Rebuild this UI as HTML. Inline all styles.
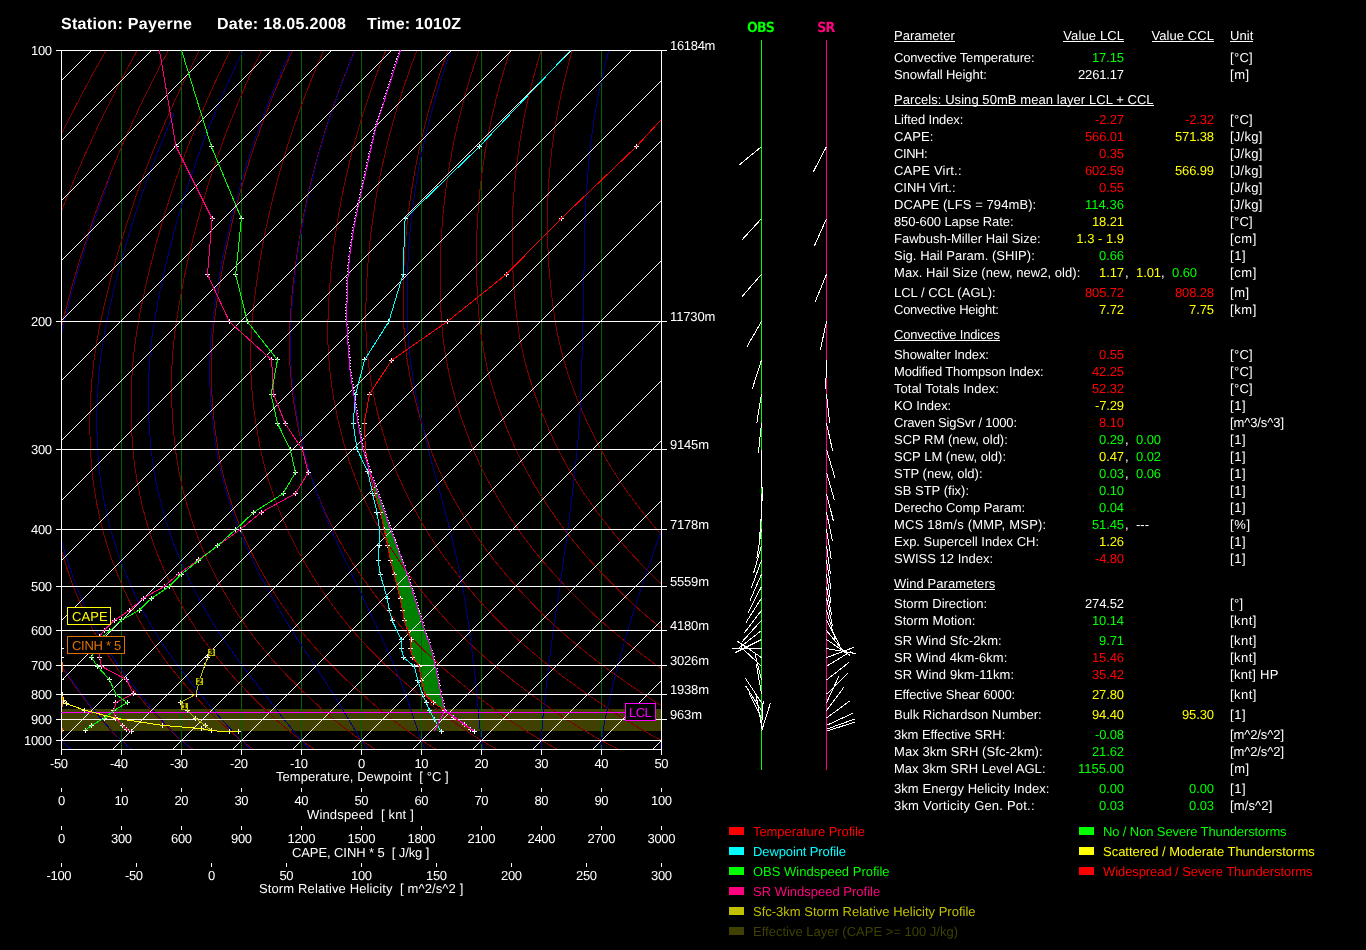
<!DOCTYPE html>
<html><head><meta charset="utf-8"><title>Sounding Payerne 18.05.2008 1010Z</title>
<style>
html,body{margin:0;padding:0;background:#000;}
body{width:1366px;height:950px;overflow:hidden;}
svg{display:block;will-change:transform;font-family:"Liberation Sans",Arial,sans-serif;font-size:13px;}
</style></head><body>
<svg width="1366" height="950" viewBox="0 0 1366 950" shape-rendering="crispEdges" text-rendering="geometricPrecision">
<defs><clipPath id="plotclip"><rect x="61" y="50" width="601" height="700"/></clipPath>
<clipPath id="plotclip2"><rect x="61" y="50" width="603" height="700"/></clipPath></defs>
<rect width="1366" height="950" fill="#000"/>
<g clip-path="url(#plotclip)">
<rect x="61" y="709" width="601" height="22" fill="#404000"/>
<polygon points="373.5,481.0 391.0,530.2 407.6,575.0 424.3,628.9 431.5,649.4 435.8,667.3 440.2,690.3 444.8,710.5 444.8,710.5 433.3,702.6 424.8,694.2 421.2,680.1 419.2,666.0 412.8,657.8 410.2,648.6 411.0,639.9 404.3,620.7 402.5,610.4 400.0,598.1 394.1,574.3 390.5,560.4 387.7,545.6 384.0,529.0 380.7,512.3 374.5,493.0" fill="#008000"/>
<line x1="121.5" y1="50.0" x2="121.5" y2="750.0" stroke="#006400" stroke-width="1"/>
<line x1="181.5" y1="50.0" x2="181.5" y2="750.0" stroke="#006400" stroke-width="1"/>
<line x1="241.5" y1="50.0" x2="241.5" y2="750.0" stroke="#006400" stroke-width="1"/>
<line x1="301.5" y1="50.0" x2="301.5" y2="750.0" stroke="#006400" stroke-width="1"/>
<line x1="361.5" y1="50.0" x2="361.5" y2="750.0" stroke="#006400" stroke-width="1"/>
<line x1="421.5" y1="50.0" x2="421.5" y2="750.0" stroke="#006400" stroke-width="1"/>
<line x1="481.5" y1="50.0" x2="481.5" y2="750.0" stroke="#006400" stroke-width="1"/>
<line x1="541.5" y1="50.0" x2="541.5" y2="750.0" stroke="#006400" stroke-width="1"/>
<line x1="601.5" y1="50.0" x2="601.5" y2="750.0" stroke="#006400" stroke-width="1"/>
<polyline points="106.1,50.5 102.1,57.5 98.1,64.5 94.2,71.5 90.4,78.5 86.6,85.5 82.8,92.5 79.1,99.5 75.5,106.5 71.9,113.5 68.3,120.5 64.8,127.5 61.4,134.5 58.0,141.5 54.6,148.5 51.3,155.5 48.0,162.5 44.8,169.5 41.7,176.5 38.5,183.5 35.5,190.5 32.5,197.5 29.5,204.5 26.6,211.5 23.7,218.5 24.8,694.5 29.6,701.5 34.5,708.5 39.7,715.5 45.2,722.5 51.2,729.5 57.6,736.5 64.6,743.5 71.3,749.5" fill="none" stroke="#800000" stroke-width="1" />
<polyline points="137.2,50.5 133.3,57.5 129.5,64.5 125.7,71.5 122.0,78.5 118.4,85.5 114.8,92.5 111.2,99.5 107.7,106.5 104.2,113.5 100.8,120.5 97.5,127.5 94.2,134.5 91.0,141.5 87.8,148.5 84.6,155.5 81.5,162.5 78.5,169.5 75.5,176.5 72.6,183.5 69.7,190.5 66.8,197.5 64.0,204.5 61.3,211.5 58.6,218.5 56.0,225.5 53.4,232.5 50.9,239.5 48.4,246.5 46.0,253.5 43.6,260.5 41.2,267.5 38.9,274.5 36.7,281.5 34.5,288.5 32.4,295.5 30.3,302.5 28.3,309.5 26.3,316.5 24.3,323.5 22.5,330.5 22.9,582.5 25.2,589.5 27.5,596.5 30.1,603.5 32.8,610.5 35.7,617.5 38.8,624.5 42.0,631.5 45.5,638.5 49.2,645.5 53.2,652.5 57.3,659.5 61.6,666.5 66.2,673.5 70.9,680.5 75.9,687.5 81.1,694.5 86.4,701.5 91.8,708.5 97.6,715.5 103.7,722.5 110.2,729.5 117.2,736.5 124.9,743.5 132.1,749.5" fill="none" stroke="#800000" stroke-width="1" />
<polyline points="168.3,50.5 164.5,57.5 160.8,64.5 157.2,71.5 153.7,78.5 150.1,85.5 146.7,92.5 143.3,99.5 139.9,106.5 136.6,113.5 133.4,120.5 130.2,127.5 127.0,134.5 123.9,141.5 120.9,148.5 117.9,155.5 115.0,162.5 112.1,169.5 109.3,176.5 106.6,183.5 103.9,190.5 101.2,197.5 98.6,204.5 96.0,211.5 93.5,218.5 91.1,225.5 88.7,232.5 86.4,239.5 84.1,246.5 81.8,253.5 79.6,260.5 77.5,267.5 75.4,274.5 73.4,281.5 71.4,288.5 69.5,295.5 67.6,302.5 65.8,309.5 64.0,316.5 62.3,323.5 60.6,330.5 59.1,337.5 57.7,344.5 56.4,351.5 55.1,358.5 54.0,365.5 53.0,372.5 52.1,379.5 51.3,386.5 50.5,393.5 49.9,400.5 49.3,407.5 48.9,414.5 48.5,421.5 48.2,428.5 48.0,435.5 47.9,442.5 47.9,449.5 48.0,456.5 48.2,463.5 48.5,470.5 49.0,477.5 49.6,484.5 50.3,491.5 51.2,498.5 52.2,505.5 53.3,512.5 54.5,519.5 55.9,526.5 57.3,533.5 59.0,540.5 60.7,547.5 62.7,554.5 64.8,561.5 67.0,568.5 69.4,575.5 71.9,582.5 74.5,589.5 77.3,596.5 80.3,603.5 83.4,610.5 86.7,617.5 90.2,624.5 93.9,631.5 97.9,638.5 102.0,645.5 106.4,652.5 111.1,659.5 115.9,666.5 120.9,673.5 126.2,680.5 131.7,687.5 137.4,694.5 143.2,701.5 149.2,708.5 155.5,715.5 162.2,722.5 169.3,729.5 176.9,736.5 185.2,743.5 193.0,749.5" fill="none" stroke="#800000" stroke-width="1" />
<polyline points="199.3,50.5 195.7,57.5 192.2,64.5 188.7,71.5 185.3,78.5 181.9,85.5 178.6,92.5 175.3,99.5 172.1,106.5 169.0,113.5 165.9,120.5 162.9,127.5 159.9,134.5 156.9,141.5 154.1,148.5 151.3,155.5 148.5,162.5 145.8,169.5 143.2,176.5 140.6,183.5 138.0,190.5 135.6,197.5 133.1,204.5 130.8,211.5 128.5,218.5 126.2,225.5 124.0,232.5 121.8,239.5 119.7,246.5 117.7,253.5 115.7,260.5 113.8,267.5 111.9,274.5 110.1,281.5 108.3,288.5 106.6,295.5 104.9,302.5 103.3,309.5 101.7,316.5 100.2,323.5 98.8,330.5 97.5,337.5 96.3,344.5 95.2,351.5 94.2,358.5 93.4,365.5 92.6,372.5 91.9,379.5 91.3,386.5 90.9,393.5 90.5,400.5 90.2,407.5 90.0,414.5 89.9,421.5 89.9,428.5 90.0,435.5 90.2,442.5 90.4,449.5 90.8,456.5 91.3,463.5 91.9,470.5 92.7,477.5 93.7,484.5 94.7,491.5 95.9,498.5 97.2,505.5 98.7,512.5 100.2,519.5 101.9,526.5 103.7,533.5 105.7,540.5 107.8,547.5 110.1,554.5 112.6,561.5 115.2,568.5 118.0,575.5 120.9,582.5 123.9,589.5 127.1,596.5 130.5,603.5 134.0,610.5 137.8,617.5 141.7,624.5 145.8,631.5 150.2,638.5 154.9,645.5 159.7,652.5 164.8,659.5 170.1,666.5 175.7,673.5 181.5,680.5 187.5,687.5 193.7,694.5 200.0,701.5 206.5,708.5 213.4,715.5 220.6,722.5 228.3,729.5 236.5,736.5 245.4,743.5 253.8,749.5" fill="none" stroke="#800000" stroke-width="1" />
<polyline points="230.4,50.5 226.9,57.5 223.5,64.5 220.2,71.5 216.9,78.5 213.7,85.5 210.5,92.5 207.4,99.5 204.3,106.5 201.3,113.5 198.4,120.5 195.5,127.5 192.7,134.5 189.9,141.5 187.2,148.5 184.6,155.5 182.0,162.5 179.5,169.5 177.0,176.5 174.6,183.5 172.2,190.5 169.9,197.5 167.7,204.5 165.5,211.5 163.4,218.5 161.3,225.5 159.3,232.5 157.3,239.5 155.4,246.5 153.6,253.5 151.8,260.5 150.0,267.5 148.4,274.5 146.7,281.5 145.2,288.5 143.7,295.5 142.2,302.5 140.8,309.5 139.4,316.5 138.2,323.5 137.0,330.5 135.9,337.5 134.9,344.5 134.1,351.5 133.3,358.5 132.7,365.5 132.2,372.5 131.7,379.5 131.4,386.5 131.2,393.5 131.1,400.5 131.1,407.5 131.2,414.5 131.3,421.5 131.6,428.5 132.0,435.5 132.4,442.5 133.0,449.5 133.6,456.5 134.4,463.5 135.4,470.5 136.5,477.5 137.7,484.5 139.1,491.5 140.6,498.5 142.2,505.5 144.0,512.5 145.9,519.5 147.9,526.5 150.1,533.5 152.4,540.5 154.9,547.5 157.6,554.5 160.4,561.5 163.4,568.5 166.6,575.5 169.9,582.5 173.3,589.5 176.9,596.5 180.7,603.5 184.7,610.5 188.8,617.5 193.2,624.5 197.8,631.5 202.6,638.5 207.7,645.5 213.0,652.5 218.6,659.5 224.4,666.5 230.4,673.5 236.7,680.5 243.3,687.5 250.0,694.5 256.8,701.5 263.9,708.5 271.3,715.5 279.1,722.5 287.4,729.5 296.2,736.5 305.7,743.5 314.7,749.5" fill="none" stroke="#800000" stroke-width="1" />
<polyline points="261.5,50.5 258.2,57.5 254.9,64.5 251.7,71.5 248.5,78.5 245.5,85.5 242.4,92.5 239.5,99.5 236.6,106.5 233.7,113.5 230.9,120.5 228.2,127.5 225.5,134.5 222.9,141.5 220.4,148.5 217.9,155.5 215.5,162.5 213.1,169.5 210.8,176.5 208.6,183.5 206.4,190.5 204.3,197.5 202.2,204.5 200.2,211.5 198.3,218.5 196.4,225.5 194.6,232.5 192.8,239.5 191.1,246.5 189.4,253.5 187.9,260.5 186.3,267.5 184.8,274.5 183.4,281.5 182.1,288.5 180.8,295.5 179.5,302.5 178.3,309.5 177.2,316.5 176.1,323.5 175.1,330.5 174.3,337.5 173.5,344.5 172.9,351.5 172.4,358.5 172.0,365.5 171.7,372.5 171.6,379.5 171.5,386.5 171.6,393.5 171.7,400.5 172.0,407.5 172.3,414.5 172.8,421.5 173.3,428.5 173.9,435.5 174.7,442.5 175.5,449.5 176.4,456.5 177.5,463.5 178.8,470.5 180.2,477.5 181.7,484.5 183.4,491.5 185.3,498.5 187.3,505.5 189.4,512.5 191.6,519.5 194.0,526.5 196.5,533.5 199.2,540.5 202.0,547.5 205.1,554.5 208.3,561.5 211.7,568.5 215.2,575.5 218.9,582.5 222.7,589.5 226.7,596.5 230.9,603.5 235.3,610.5 239.9,617.5 244.7,624.5 249.7,631.5 255.0,638.5 260.5,645.5 266.3,652.5 272.4,659.5 278.6,666.5 285.2,673.5 292.0,680.5 299.0,687.5 306.3,694.5 313.7,701.5 321.2,708.5 329.2,715.5 337.6,722.5 346.4,729.5 355.8,736.5 366.0,743.5 375.5,749.5" fill="none" stroke="#800000" stroke-width="1" />
<polyline points="292.6,50.5 289.4,57.5 286.2,64.5 283.2,71.5 280.2,78.5 277.2,85.5 274.3,92.5 271.5,99.5 268.8,106.5 266.1,113.5 263.5,120.5 260.9,127.5 258.4,134.5 255.9,141.5 253.6,148.5 251.2,155.5 249.0,162.5 246.8,169.5 244.7,176.5 242.6,183.5 240.6,190.5 238.7,197.5 236.8,204.5 235.0,211.5 233.2,218.5 231.5,225.5 229.9,232.5 228.3,239.5 226.8,246.5 225.3,253.5 223.9,260.5 222.6,267.5 221.3,274.5 220.1,281.5 218.9,288.5 217.8,295.5 216.8,302.5 215.8,309.5 214.9,316.5 214.0,323.5 213.3,330.5 212.7,337.5 212.2,344.5 211.8,351.5 211.5,358.5 211.4,365.5 211.3,372.5 211.4,379.5 211.6,386.5 211.9,393.5 212.3,400.5 212.8,407.5 213.4,414.5 214.2,421.5 215.0,428.5 215.9,435.5 216.9,442.5 218.0,449.5 219.3,456.5 220.7,463.5 222.2,470.5 223.9,477.5 225.8,484.5 227.8,491.5 230.0,498.5 232.3,505.5 234.7,512.5 237.3,519.5 240.0,526.5 242.9,533.5 245.9,540.5 249.1,547.5 252.5,554.5 256.1,561.5 259.9,568.5 263.8,575.5 267.9,582.5 272.1,589.5 276.5,596.5 281.1,603.5 285.9,610.5 290.9,617.5 296.1,624.5 301.6,631.5 307.3,638.5 313.3,645.5 319.6,652.5 326.1,659.5 332.9,666.5 339.9,673.5 347.2,680.5 354.8,687.5 362.6,694.5 370.5,701.5 378.6,708.5 387.1,715.5 396.0,722.5 405.5,729.5 415.5,736.5 426.3,743.5 436.3,749.5" fill="none" stroke="#800000" stroke-width="1" />
<polyline points="323.6,50.5 320.6,57.5 317.6,64.5 314.7,71.5 311.8,78.5 309.0,85.5 306.3,92.5 303.6,99.5 301.0,106.5 298.4,113.5 296.0,120.5 293.6,127.5 291.2,134.5 288.9,141.5 286.7,148.5 284.6,155.5 282.5,162.5 280.5,169.5 278.5,176.5 276.6,183.5 274.8,190.5 273.0,197.5 271.3,204.5 269.7,211.5 268.1,218.5 266.6,225.5 265.2,232.5 263.8,239.5 262.4,246.5 261.2,253.5 260.0,260.5 258.9,267.5 257.8,274.5 256.8,281.5 255.8,288.5 254.9,295.5 254.1,302.5 253.3,309.5 252.6,316.5 252.0,323.5 251.5,330.5 251.1,337.5 250.8,344.5 250.6,351.5 250.6,358.5 250.7,365.5 250.9,372.5 251.2,379.5 251.7,386.5 252.2,393.5 252.9,400.5 253.7,407.5 254.6,414.5 255.6,421.5 256.7,428.5 257.9,435.5 259.2,442.5 260.6,449.5 262.1,456.5 263.8,463.5 265.6,470.5 267.7,477.5 269.8,484.5 272.2,491.5 274.7,498.5 277.3,505.5 280.1,512.5 283.0,519.5 286.0,526.5 289.2,533.5 292.6,540.5 296.2,547.5 300.0,554.5 304.0,561.5 308.1,568.5 312.4,575.5 316.9,582.5 321.5,589.5 326.3,596.5 331.3,603.5 336.5,610.5 341.9,617.5 347.6,624.5 353.5,631.5 359.7,638.5 366.2,645.5 372.9,652.5 379.9,659.5 387.1,666.5 394.7,673.5 402.5,680.5 410.6,687.5 418.9,694.5 427.3,701.5 435.9,708.5 445.0,715.5 454.5,722.5 464.5,729.5 475.1,736.5 486.5,743.5 497.2,749.5" fill="none" stroke="#800000" stroke-width="1" />
<polyline points="354.7,50.5 351.8,57.5 348.9,64.5 346.1,71.5 343.4,78.5 340.8,85.5 338.2,92.5 335.7,99.5 333.2,106.5 330.8,113.5 328.5,120.5 326.2,127.5 324.1,134.5 321.9,141.5 319.9,148.5 317.9,155.5 316.0,162.5 314.1,169.5 312.3,176.5 310.6,183.5 309.0,190.5 307.4,197.5 305.9,204.5 304.4,211.5 303.0,218.5 301.7,225.5 300.4,232.5 299.3,239.5 298.1,246.5 297.1,253.5 296.1,260.5 295.1,267.5 294.3,274.5 293.4,281.5 292.7,288.5 292.0,295.5 291.4,302.5 290.9,309.5 290.4,316.5 289.9,323.5 289.6,330.5 289.5,337.5 289.4,344.5 289.5,351.5 289.7,358.5 290.0,365.5 290.5,372.5 291.1,379.5 291.8,386.5 292.6,393.5 293.5,400.5 294.6,407.5 295.7,414.5 297.0,421.5 298.4,428.5 299.8,435.5 301.4,442.5 303.1,449.5 304.9,456.5 306.9,463.5 309.1,470.5 311.4,477.5 313.9,484.5 316.5,491.5 319.4,498.5 322.3,505.5 325.4,512.5 328.7,519.5 332.1,526.5 335.6,533.5 339.4,540.5 343.3,547.5 347.5,554.5 351.8,561.5 356.3,568.5 361.0,575.5 365.9,582.5 370.9,589.5 376.1,596.5 381.5,603.5 387.1,610.5 393.0,617.5 399.1,624.5 405.4,631.5 412.1,638.5 419.0,645.5 426.2,652.5 433.7,659.5 441.4,666.5 449.4,673.5 457.8,680.5 466.4,687.5 475.2,694.5 484.1,701.5 493.3,708.5 502.9,715.5 513.0,722.5 523.5,729.5 534.8,736.5 546.8,743.5 558.0,749.5" fill="none" stroke="#800000" stroke-width="1" />
<polyline points="385.8,50.5 383.0,57.5 380.3,64.5 377.6,71.5 375.1,78.5 372.5,85.5 370.1,92.5 367.7,99.5 365.4,106.5 363.2,113.5 361.0,120.5 358.9,127.5 356.9,134.5 354.9,141.5 353.0,148.5 351.2,155.5 349.5,162.5 347.8,169.5 346.2,176.5 344.6,183.5 343.2,190.5 341.8,197.5 340.4,204.5 339.1,211.5 337.9,218.5 336.8,225.5 335.7,232.5 334.7,239.5 333.8,246.5 332.9,253.5 332.1,260.5 331.4,267.5 330.7,274.5 330.1,281.5 329.6,288.5 329.1,295.5 328.7,302.5 328.4,309.5 328.1,316.5 327.9,323.5 327.8,330.5 327.8,337.5 328.0,344.5 328.3,351.5 328.8,358.5 329.4,365.5 330.1,372.5 330.9,379.5 331.8,386.5 332.9,393.5 334.1,400.5 335.4,407.5 336.9,414.5 338.4,421.5 340.1,428.5 341.8,435.5 343.7,442.5 345.6,449.5 347.7,456.5 350.0,463.5 352.5,470.5 355.1,477.5 357.9,484.5 360.9,491.5 364.0,498.5 367.3,505.5 370.8,512.5 374.4,519.5 378.1,526.5 382.0,533.5 386.1,540.5 390.4,547.5 394.9,554.5 399.6,561.5 404.5,568.5 409.6,575.5 414.9,582.5 420.3,589.5 425.9,596.5 431.7,603.5 437.8,610.5 444.0,617.5 450.6,624.5 457.3,631.5 464.4,638.5 471.8,645.5 479.5,652.5 487.5,659.5 495.7,666.5 504.2,673.5 513.0,680.5 522.1,687.5 531.5,694.5 540.9,701.5 550.6,708.5 560.8,715.5 571.4,722.5 582.6,729.5 594.4,736.5 607.1,743.5 618.9,749.5" fill="none" stroke="#800000" stroke-width="1" />
<polyline points="416.9,50.5 414.2,57.5 411.6,64.5 409.1,71.5 406.7,78.5 404.3,85.5 402.0,92.5 399.8,99.5 397.6,106.5 395.5,113.5 393.5,120.5 391.6,127.5 389.7,134.5 387.9,141.5 386.2,148.5 384.6,155.5 383.0,162.5 381.5,169.5 380.0,176.5 378.6,183.5 377.3,190.5 376.1,197.5 375.0,204.5 373.9,211.5 372.9,218.5 371.9,225.5 371.0,232.5 370.2,239.5 369.5,246.5 368.8,253.5 368.2,260.5 367.7,267.5 367.2,274.5 366.8,281.5 366.5,288.5 366.2,295.5 366.0,302.5 365.9,309.5 365.8,316.5 365.8,323.5 366.0,330.5 366.2,337.5 366.6,344.5 367.2,351.5 367.9,358.5 368.7,365.5 369.6,372.5 370.7,379.5 371.9,386.5 373.3,393.5 374.7,400.5 376.3,407.5 378.0,414.5 379.8,421.5 381.7,428.5 383.8,435.5 385.9,442.5 388.2,449.5 390.6,456.5 393.2,463.5 395.9,470.5 398.9,477.5 402.0,484.5 405.3,491.5 408.7,498.5 412.3,505.5 416.1,512.5 420.1,519.5 424.1,526.5 428.4,533.5 432.8,540.5 437.5,547.5 442.4,554.5 447.5,561.5 452.8,568.5 458.2,575.5 463.9,582.5 469.7,589.5 475.7,596.5 481.9,603.5 488.4,610.5 495.1,617.5 502.0,624.5 509.3,631.5 516.8,638.5 524.6,645.5 532.8,652.5 541.2,659.5 549.9,666.5 558.9,673.5 568.3,680.5 577.9,687.5 587.7,694.5 597.8,701.5 608.0,708.5 618.7,715.5 629.9,722.5 641.6,729.5 654.0,736.5 667.3,743.5 679.7,749.5" fill="none" stroke="#800000" stroke-width="1" />
<polyline points="448.0,50.5 445.4,57.5 443.0,64.5 440.6,71.5 438.3,78.5 436.1,85.5 433.9,92.5 431.9,99.5 429.8,106.5 427.9,113.5 426.1,120.5 424.3,127.5 422.6,134.5 420.9,141.5 419.4,148.5 417.9,155.5 416.5,162.5 415.1,169.5 413.9,176.5 412.7,183.5 411.5,190.5 410.5,197.5 409.5,204.5 408.6,211.5 407.8,218.5 407.0,225.5 406.3,232.5 405.7,239.5 405.2,246.5 404.7,253.5 404.3,260.5 403.9,267.5 403.7,274.5 403.5,281.5 403.4,288.5 403.3,295.5 403.3,302.5 403.4,309.5 403.6,316.5 403.8,323.5 404.1,330.5 404.6,337.5 405.3,344.5 406.0,351.5 407.0,358.5 408.0,365.5 409.2,372.5 410.6,379.5 412.0,386.5 413.6,393.5 415.3,400.5 417.2,407.5 419.1,414.5 421.2,421.5 423.4,428.5 425.7,435.5 428.2,442.5 430.7,449.5 433.4,456.5 436.3,463.5 439.4,470.5 442.6,477.5 446.0,484.5 449.6,491.5 453.4,498.5 457.4,505.5 461.5,512.5 465.7,519.5 470.2,526.5 474.8,533.5 479.6,540.5 484.6,547.5 489.9,554.5 495.3,561.5 501.0,568.5 506.8,575.5 512.9,582.5 519.1,589.5 525.5,596.5 532.1,603.5 539.0,610.5 546.1,617.5 553.5,624.5 561.2,631.5 569.2,638.5 577.5,645.5 586.1,652.5 595.0,659.5 604.2,666.5 613.7,673.5 623.5,680.5 633.7,687.5 644.0,694.5 654.6,701.5 665.4,708.5 676.6,715.5 688.4,722.5 700.7,729.5" fill="none" stroke="#800000" stroke-width="1" />
<polyline points="479.0,50.5 476.6,57.5 474.3,64.5 472.1,71.5 469.9,78.5 467.9,85.5 465.8,92.5 463.9,99.5 462.1,106.5 460.3,113.5 458.6,120.5 457.0,127.5 455.4,134.5 453.9,141.5 452.5,148.5 451.2,155.5 450.0,162.5 448.8,169.5 447.7,176.5 446.7,183.5 445.7,190.5 444.9,197.5 444.1,204.5 443.3,211.5 442.7,218.5 442.1,225.5 441.6,232.5 441.2,239.5 440.8,246.5 440.5,253.5 440.3,260.5 440.2,267.5 440.1,274.5 440.2,281.5 440.2,288.5 440.4,295.5 440.6,302.5 440.9,309.5 441.3,316.5 441.7,323.5 442.3,330.5 443.0,337.5 443.9,344.5 444.9,351.5 446.1,358.5 447.4,365.5 448.8,372.5 450.4,379.5 452.1,386.5 454.0,393.5 455.9,400.5 458.0,407.5 460.3,414.5 462.6,421.5 465.1,428.5 467.7,435.5 470.4,442.5 473.3,449.5 476.2,456.5 479.4,463.5 482.8,470.5 486.3,477.5 490.1,484.5 494.0,491.5 498.1,498.5 502.4,505.5 506.8,512.5 511.4,519.5 516.2,526.5 521.1,533.5 526.3,540.5 531.7,547.5 537.3,554.5 543.1,561.5 549.2,568.5 555.4,575.5 561.9,582.5 568.5,589.5 575.3,596.5 582.3,603.5 589.6,610.5 597.2,617.5 605.0,624.5 613.1,631.5 621.5,638.5 630.3,645.5 639.4,652.5 648.8,659.5 658.4,666.5 668.4,673.5 678.8,680.5 689.4,687.5 700.3,694.5" fill="none" stroke="#800000" stroke-width="1" />
<polyline points="510.1,50.5 507.9,57.5 505.7,64.5 503.6,71.5 501.6,78.5 499.6,85.5 497.8,92.5 496.0,99.5 494.3,106.5 492.7,113.5 491.1,120.5 489.6,127.5 488.2,134.5 486.9,141.5 485.7,148.5 484.5,155.5 483.5,162.5 482.5,169.5 481.5,176.5 480.7,183.5 479.9,190.5 479.2,197.5 478.6,204.5 478.1,211.5 477.6,218.5 477.2,225.5 476.9,232.5 476.7,239.5 476.5,246.5 476.4,253.5 476.4,260.5 476.5,267.5 476.6,274.5 476.8,281.5 477.1,288.5 477.5,295.5 477.9,302.5 478.4,309.5 479.0,316.5 479.7,323.5 480.5,330.5 481.4,337.5 482.5,344.5 483.8,351.5 485.2,358.5 486.7,365.5 488.4,372.5 490.2,379.5 492.2,386.5 494.3,393.5 496.5,400.5 498.9,407.5 501.4,414.5 504.0,421.5 506.8,428.5 509.7,435.5 512.7,442.5 515.8,449.5 519.1,456.5 522.5,463.5 526.2,470.5 530.1,477.5 534.1,484.5 538.4,491.5 542.8,498.5 547.4,505.5 552.2,512.5 557.1,519.5 562.2,526.5 567.5,533.5 573.0,540.5 578.8,547.5 584.8,554.5 591.0,561.5 597.4,568.5 604.0,575.5 610.8,582.5 617.9,589.5 625.1,596.5 632.5,603.5 640.2,610.5 648.2,617.5 656.5,624.5 665.0,631.5 673.9,638.5 683.1,645.5 692.7,652.5" fill="none" stroke="#800000" stroke-width="1" />
<polyline points="541.2,50.5 539.1,57.5 537.0,64.5 535.1,71.5 533.2,78.5 531.4,85.5 529.7,92.5 528.0,99.5 526.5,106.5 525.0,113.5 523.6,120.5 522.3,127.5 521.1,134.5 519.9,141.5 518.9,148.5 517.9,155.5 516.9,162.5 516.1,169.5 515.4,176.5 514.7,183.5 514.1,190.5 513.6,197.5 513.1,204.5 512.8,211.5 512.5,218.5 512.3,225.5 512.2,232.5 512.1,239.5 512.2,246.5 512.3,253.5 512.5,260.5 512.7,267.5 513.1,274.5 513.5,281.5 514.0,288.5 514.6,295.5 515.2,302.5 515.9,309.5 516.7,316.5 517.6,323.5 518.6,330.5 519.8,337.5 521.1,344.5 522.6,351.5 524.2,358.5 526.0,365.5 528.0,372.5 530.0,379.5 532.3,386.5 534.6,393.5 537.1,400.5 539.8,407.5 542.6,414.5 545.5,421.5 548.5,428.5 551.6,435.5 554.9,442.5 558.3,449.5 561.9,456.5 565.7,463.5 569.6,470.5 573.8,477.5 578.2,484.5 582.7,491.5 587.5,498.5 592.4,505.5 597.5,512.5 602.8,519.5 608.3,526.5 613.9,533.5 619.8,540.5 625.9,547.5 632.2,554.5 638.8,561.5 645.6,568.5 652.6,575.5 659.8,582.5 667.2,589.5 674.9,596.5 682.7,603.5 690.9,610.5 699.3,617.5" fill="none" stroke="#800000" stroke-width="1" />
<polyline points="572.3,50.5 570.3,57.5 568.4,64.5 566.6,71.5 564.8,78.5 563.2,85.5 561.6,92.5 560.1,99.5 558.7,106.5 557.4,113.5 556.1,120.5 555.0,127.5 553.9,134.5 552.9,141.5 552.0,148.5 551.2,155.5 550.4,162.5 549.8,169.5 549.2,176.5 548.7,183.5 548.3,190.5 547.9,197.5 547.7,204.5 547.5,211.5 547.4,218.5 547.4,225.5 547.5,232.5 547.6,239.5 547.9,246.5 548.2,253.5 548.5,260.5 549.0,267.5 549.6,274.5 550.2,281.5 550.9,288.5 551.7,295.5 552.5,302.5 553.5,309.5 554.5,316.5 555.6,323.5 556.8,330.5 558.2,337.5 559.8,344.5 561.5,351.5 563.3,358.5 565.4,365.5 567.5,372.5 569.9,379.5 572.4,386.5 575.0,393.5 577.7,400.5 580.6,407.5 583.7,414.5 586.9,421.5 590.2,428.5 593.6,435.5 597.2,442.5 600.9,449.5 604.7,456.5 608.8,463.5 613.1,470.5 617.5,477.5 622.2,484.5 627.1,491.5 632.2,498.5 637.4,505.5 642.9,512.5 648.5,519.5 654.3,526.5 660.3,533.5 666.5,540.5 673.0,547.5 679.7,554.5 686.7,561.5 693.8,568.5 701.2,575.5" fill="none" stroke="#800000" stroke-width="1" />
<polyline points="71.2,749.5 64.6,743.5 57.6,736.5 51.3,729.5 45.4,722.5 39.8,715.5 34.6,708.5 29.7,701.5 25.0,694.5" fill="none" stroke="#000080" stroke-width="1" />
<polyline points="131.7,749.5 124.7,743.5 117.4,736.5 110.6,729.5 104.3,722.5 98.3,715.5 92.6,708.5 87.2,701.5 82.0,694.5 76.9,687.5 71.9,680.5 67.1,673.5 62.6,666.5 58.2,659.5 54.1,652.5 50.2,645.5 46.4,638.5 42.9,631.5 39.6,624.5 36.5,617.5 33.6,610.5 30.9,603.5 28.3,596.5 25.9,589.5 23.6,582.5 22.4,330.5 24.2,323.5 26.2,316.5 28.2,309.5 30.2,302.5 32.3,295.5 34.4,288.5 36.6,281.5 38.8,274.5 41.1,267.5 43.4,260.5 45.8,253.5 48.2,246.5 50.7,239.5" fill="none" stroke="#000080" stroke-width="1" />
<polyline points="191.8,749.5 184.8,743.5 177.3,736.5 170.4,729.5 163.8,722.5 157.5,715.5 151.5,708.5 145.8,701.5 140.2,694.5 134.7,687.5 129.3,680.5 124.1,673.5 119.1,666.5 114.3,659.5 109.7,652.5 105.3,645.5 101.2,638.5 97.2,631.5 93.5,624.5 90.0,617.5 86.6,610.5 83.5,603.5 80.5,596.5 77.6,589.5 74.9,582.5 72.4,575.5 70.0,568.5 67.7,561.5 65.5,554.5 63.6,547.5 61.7,540.5 60.1,533.5 58.6,526.5 57.2,519.5 55.9,512.5 54.8,505.5 53.7,498.5 52.8,491.5 52.1,484.5 51.4,477.5 50.9,470.5 50.5,463.5 50.3,456.5 50.1,449.5 50.2,442.5 50.2,435.5 50.4,428.5 50.7,421.5 51.0,414.5 51.4,407.5 51.9,400.5 52.5,393.5 53.2,386.5 54.0,379.5 54.9,372.5 55.9,365.5 57.0,358.5 58.2,351.5 59.5,344.5 60.9,337.5 62.4,330.5 64.0,323.5 65.7,316.5 67.5,309.5 69.3,302.5 71.1,295.5 73.1,288.5 75.0,281.5 77.0,274.5 79.1,267.5 81.2,260.5 83.4,253.5 85.6,246.5 87.9,239.5 90.2,232.5 92.6,225.5 95.0,218.5 97.5,211.5 100.0,204.5 102.6,197.5 105.2,190.5 107.9,183.5 110.7,176.5" fill="none" stroke="#000080" stroke-width="1" />
<polyline points="251.2,749.5 244.6,743.5 237.5,736.5 230.8,729.5 224.4,722.5 218.1,715.5 212.2,708.5 206.4,701.5 200.6,694.5 194.9,687.5 189.3,680.5 183.8,673.5 178.5,666.5 173.4,659.5 168.4,652.5 163.7,645.5 159.1,638.5 154.7,631.5 150.6,624.5 146.6,617.5 142.9,610.5 139.3,603.5 135.9,596.5 132.6,589.5 129.5,582.5 126.6,575.5 123.7,568.5 121.0,561.5 118.5,554.5 116.1,547.5 113.9,540.5 111.8,533.5 109.9,526.5 108.2,519.5 106.5,512.5 105.0,505.5 103.6,498.5 102.4,491.5 101.2,484.5 100.2,477.5 99.4,470.5 98.6,463.5 98.1,456.5 97.6,449.5 97.3,442.5 97.1,435.5 96.9,428.5 96.9,421.5 96.9,414.5 97.0,407.5 97.3,400.5 97.6,393.5 98.0,386.5 98.5,379.5 99.1,372.5 99.8,365.5 100.6,358.5 101.6,351.5 102.6,344.5 103.7,337.5 105.0,330.5 106.4,323.5 107.8,316.5 109.3,309.5 110.9,302.5 112.5,295.5 114.2,288.5 115.9,281.5 117.7,274.5 119.6,267.5 121.5,260.5 123.4,253.5 125.4,246.5 127.5,239.5 129.6,232.5 131.7,225.5 133.9,218.5 136.2,211.5 138.6,204.5 140.9,197.5 143.4,190.5 145.9,183.5 148.4,176.5 151.0,169.5 153.7,162.5 156.4,155.5 159.2,148.5 162.0,141.5 164.9,134.5 167.9,127.5 170.9,120.5 173.9,113.5" fill="none" stroke="#000080" stroke-width="1" />
<polyline points="309.7,749.5 304.2,743.5 298.1,736.5 292.3,729.5 286.6,722.5 281.0,715.5 275.6,708.5 270.2,701.5 264.8,694.5 259.3,687.5 253.9,680.5 248.4,673.5 243.1,666.5 237.9,659.5 232.9,652.5 227.9,645.5 223.1,638.5 218.4,631.5 214.0,624.5 209.7,617.5 205.6,610.5 201.7,603.5 197.9,596.5 194.2,589.5 190.7,582.5 187.3,575.5 184.1,568.5 180.9,561.5 178.0,554.5 175.2,547.5 172.5,540.5 170.0,533.5 167.7,526.5 165.6,519.5 163.5,512.5 161.6,505.5 159.8,498.5 158.1,491.5 156.6,484.5 155.2,477.5 154.0,470.5 152.9,463.5 151.9,456.5 151.1,449.5 150.4,442.5 149.9,435.5 149.4,428.5 149.0,421.5 148.6,414.5 148.4,407.5 148.3,400.5 148.3,393.5 148.4,386.5 148.6,379.5 148.9,372.5 149.3,365.5 149.8,358.5 150.4,351.5 151.2,344.5 152.0,337.5 153.0,330.5 154.1,323.5 155.3,316.5 156.5,309.5 157.8,302.5 159.2,295.5 160.6,288.5 162.0,281.5 163.6,274.5 165.2,267.5 166.8,260.5 168.5,253.5 170.2,246.5 172.1,239.5 173.9,232.5 175.9,225.5 177.8,218.5 179.9,211.5 182.0,204.5 184.1,197.5 186.4,190.5 188.6,183.5 191.0,176.5 193.4,169.5 195.8,162.5 198.3,155.5 200.9,148.5 203.5,141.5 206.2,134.5 209.0,127.5 211.8,120.5 214.6,113.5 217.6,106.5 220.5,99.5 223.6,92.5 226.7,85.5 229.9,78.5 233.1,71.5 236.4,64.5 239.7,57.5 243.1,50.5" fill="none" stroke="#000080" stroke-width="1" />
<polyline points="367.6,749.5 363.5,743.5 359.0,736.5 354.7,729.5 350.4,722.5 346.2,715.5 342.1,708.5 337.9,701.5 333.6,694.5 329.2,687.5 324.6,680.5 320.0,673.5 315.4,666.5 310.8,659.5 306.1,652.5 301.6,645.5 297.0,638.5 292.6,631.5 288.2,624.5 283.9,617.5 279.8,610.5 275.7,603.5 271.7,596.5 267.8,589.5 264.1,582.5 260.4,575.5 256.8,568.5 253.3,561.5 249.9,554.5 246.7,547.5 243.6,540.5 240.7,533.5 238.0,526.5 235.4,519.5 232.9,512.5 230.5,505.5 228.2,498.5 226.1,491.5 224.1,484.5 222.3,477.5 220.6,470.5 219.0,463.5 217.6,456.5 216.4,449.5 215.3,442.5 214.3,435.5 213.4,428.5 212.6,421.5 211.8,414.5 211.2,407.5 210.7,400.5 210.3,393.5 210.0,386.5 209.8,379.5 209.7,372.5 209.7,365.5 209.9,358.5 210.1,351.5 210.5,344.5 211.0,337.5 211.6,330.5 212.4,323.5 213.2,316.5 214.2,309.5 215.1,302.5 216.2,295.5 217.3,288.5 218.4,281.5 219.6,274.5 220.9,267.5 222.2,260.5 223.6,253.5 225.1,246.5 226.6,239.5 228.1,232.5 229.8,225.5 231.5,218.5 233.2,211.5 235.1,204.5 236.9,197.5 238.9,190.5 240.9,183.5 242.9,176.5 245.1,169.5 247.3,162.5 249.5,155.5 251.8,148.5 254.2,141.5 256.7,134.5 259.2,127.5 261.7,120.5 264.4,113.5 267.0,106.5 269.8,99.5 272.6,92.5 275.5,85.5 278.4,78.5 281.4,71.5 284.5,64.5 287.7,57.5 290.9,50.5" fill="none" stroke="#000080" stroke-width="1" />
<polyline points="425.2,749.5 422.7,743.5 420.0,736.5 417.5,729.5 415.1,722.5 412.7,715.5 410.4,708.5 408.0,701.5 405.5,694.5 402.9,687.5 400.1,680.5 397.3,673.5 394.3,666.5 391.4,659.5 388.3,652.5 385.2,645.5 382.0,638.5 378.8,631.5 375.6,624.5 372.4,617.5 369.1,610.5 365.8,603.5 362.5,596.5 359.2,589.5 355.9,582.5 352.5,575.5 349.2,568.5 345.8,561.5 342.5,554.5 339.3,547.5 336.1,540.5 333.0,533.5 330.1,526.5 327.2,519.5 324.4,512.5 321.6,505.5 319.0,498.5 316.5,491.5 314.0,484.5 311.7,477.5 309.6,470.5 307.5,463.5 305.7,456.5 303.9,449.5 302.3,442.5 300.8,435.5 299.4,428.5 298.0,421.5 296.8,414.5 295.6,407.5 294.6,400.5 293.7,393.5 292.8,386.5 292.1,379.5 291.6,372.5 291.1,365.5 290.7,358.5 290.5,351.5 290.4,344.5 290.5,337.5 290.6,330.5 290.9,323.5 291.3,316.5 291.8,309.5 292.3,302.5 292.9,295.5 293.6,288.5 294.3,281.5 295.1,274.5 296.0,267.5 296.9,260.5 297.9,253.5 298.9,246.5 300.0,239.5 301.2,232.5 302.5,225.5 303.8,218.5 305.1,211.5 306.6,204.5 308.1,197.5 309.7,190.5 311.3,183.5 313.0,176.5 314.8,169.5 316.6,162.5 318.5,155.5 320.5,148.5 322.5,141.5 324.6,134.5 326.8,127.5 329.0,120.5 331.4,113.5 333.7,106.5 336.2,99.5 338.7,92.5 341.3,85.5 343.9,78.5 346.6,71.5 349.4,64.5 352.3,57.5 355.2,50.5" fill="none" stroke="#000080" stroke-width="1" />
<polyline points="483.2,749.5 482.0,743.5 480.9,736.5 480.1,729.5 479.3,722.5 478.7,715.5 478.1,708.5 477.5,701.5 476.9,694.5 476.3,687.5 475.5,680.5 474.7,673.5 473.9,666.5 473.1,659.5 472.2,652.5 471.3,645.5 470.4,638.5 469.5,631.5 468.5,624.5 467.5,617.5 466.5,610.5 465.4,603.5 464.3,596.5 463.0,589.5 461.8,582.5 460.4,575.5 458.9,568.5 457.4,561.5 455.8,554.5 454.2,547.5 452.5,540.5 450.8,533.5 449.0,526.5 447.3,519.5 445.4,512.5 443.5,505.5 441.6,498.5 439.7,491.5 437.7,484.5 435.8,477.5 433.9,470.5 432.0,463.5 430.2,456.5 428.4,449.5 426.7,442.5 425.0,435.5 423.4,428.5 421.8,421.5 420.2,414.5 418.7,407.5 417.2,400.5 415.8,393.5 414.5,386.5 413.3,379.5 412.2,372.5 411.1,365.5 410.2,358.5 409.4,351.5 408.7,344.5 408.2,337.5 407.8,330.5 407.5,323.5 407.3,316.5 407.2,309.5 407.1,302.5 407.1,295.5 407.2,288.5 407.3,281.5 407.5,274.5 407.7,267.5 408.1,260.5 408.5,253.5 408.9,246.5 409.4,239.5 410.0,232.5 410.7,225.5 411.5,218.5 412.3,211.5 413.2,204.5 414.1,197.5 415.1,190.5 416.2,183.5 417.4,176.5 418.6,169.5 420.0,162.5 421.4,155.5 422.8,148.5 424.4,141.5 426.0,134.5 427.6,127.5 429.4,120.5 431.2,113.5 433.1,106.5 435.1,99.5 437.2,92.5 439.3,85.5 441.5,78.5 443.8,71.5 446.1,64.5 448.6,57.5 451.1,50.5" fill="none" stroke="#000080" stroke-width="1" />
<polyline points="541.6,749.5 541.5,743.5 541.6,736.5 542.0,729.5 542.5,722.5 543.1,715.5 543.9,708.5 544.7,701.5 545.5,694.5 546.2,687.5 547.0,680.5 547.8,673.5 548.6,666.5 549.5,659.5 550.4,652.5 551.2,645.5 552.2,638.5 553.1,631.5 554.1,624.5 555.2,617.5 556.2,610.5 557.3,603.5 558.3,596.5 559.4,589.5 560.4,582.5 561.4,575.5 562.4,568.5 563.4,561.5 564.4,554.5 565.4,547.5 566.4,540.5 567.3,533.5 568.3,526.5 569.2,519.5 570.1,512.5 571.0,505.5 571.9,498.5 572.7,491.5 573.5,484.5 574.2,477.5 575.0,470.5 575.7,463.5 576.4,456.5 577.1,449.5 577.8,442.5 578.4,435.5 578.9,428.5 579.4,421.5 579.9,414.5 580.3,407.5 580.6,400.5 580.9,393.5 581.2,386.5 581.4,379.5 581.6,372.5 581.8,365.5 582.0,358.5 582.1,351.5 582.3,344.5 582.5,337.5 582.7,330.5 582.9,323.5 583.1,316.5 583.3,309.5 583.5,302.5 583.6,295.5 583.7,288.5 583.8,281.5 583.9,274.5 584.1,267.5 584.2,260.5 584.3,253.5 584.4,246.5 584.5,239.5 584.7,232.5 584.9,225.5 585.2,218.5 585.4,211.5 585.7,204.5 586.1,197.5 586.5,190.5 587.0,183.5 587.5,176.5 588.1,169.5 588.7,162.5 589.4,155.5 590.2,148.5 591.0,141.5 591.9,134.5 592.9,127.5 594.0,120.5 595.1,113.5 596.3,106.5 597.6,99.5 599.0,92.5 600.4,85.5 601.9,78.5 603.5,71.5 605.2,64.5 607.0,57.5 608.8,50.5" fill="none" stroke="#000080" stroke-width="1" />
<polyline points="600.6,749.5 601.1,743.5 602.1,736.5 603.2,729.5 604.6,722.5 606.0,715.5 607.5,708.5 609.2,701.5 610.8,694.5 612.5,687.5 614.2,680.5 615.9,673.5 617.7,666.5 619.6,659.5 621.5,652.5 623.4,645.5 625.4,638.5 627.4,631.5 629.6,624.5 631.7,617.5 633.9,610.5 636.2,603.5 638.5,596.5 640.8,589.5 643.2,582.5 645.6,575.5 647.9,568.5 650.4,561.5 652.8,554.5 655.3,547.5 657.8,540.5 660.4,533.5 663.0,526.5 665.6,519.5 668.2,512.5 670.9,505.5 673.5,498.5 676.2,491.5 678.9,484.5 681.7,477.5 684.5,470.5 687.3,463.5 690.1,456.5 693.0,449.5 695.9,442.5 698.8,435.5" fill="none" stroke="#000080" stroke-width="1" />
<polyline points="660.0,749.5 660.9,743.5 662.3,736.5 664.0,729.5 665.7,722.5 667.6,715.5 669.6,708.5 671.7,701.5 673.8,694.5 676.0,687.5 678.2,680.5 680.4,673.5 682.7,666.5 685.0,659.5 687.5,652.5 689.9,645.5 692.5,638.5 695.1,631.5 697.7,624.5 700.4,617.5" fill="none" stroke="#000080" stroke-width="1" />
<line x1="61.5" y1="80.5" x2="91.5" y2="50.5" stroke="#fff" stroke-width="1"/>
<line x1="61.5" y1="140.5" x2="151.5" y2="50.5" stroke="#fff" stroke-width="1"/>
<line x1="61.5" y1="200.5" x2="211.5" y2="50.5" stroke="#fff" stroke-width="1"/>
<line x1="61.5" y1="260.5" x2="271.5" y2="50.5" stroke="#fff" stroke-width="1"/>
<line x1="61.5" y1="320.5" x2="331.5" y2="50.5" stroke="#fff" stroke-width="1"/>
<line x1="61.5" y1="380.5" x2="391.5" y2="50.5" stroke="#fff" stroke-width="1"/>
<line x1="61.5" y1="440.5" x2="451.5" y2="50.5" stroke="#fff" stroke-width="1"/>
<line x1="61.5" y1="500.5" x2="511.5" y2="50.5" stroke="#fff" stroke-width="1"/>
<line x1="61.5" y1="560.5" x2="571.5" y2="50.5" stroke="#fff" stroke-width="1"/>
<line x1="61.5" y1="620.5" x2="631.5" y2="50.5" stroke="#fff" stroke-width="1"/>
<line x1="61.5" y1="680.5" x2="661.5" y2="80.5" stroke="#fff" stroke-width="1"/>
<line x1="61.5" y1="740.5" x2="661.5" y2="140.5" stroke="#fff" stroke-width="1"/>
<line x1="112.5" y1="749.5" x2="661.5" y2="200.5" stroke="#fff" stroke-width="1"/>
<line x1="172.5" y1="749.5" x2="661.5" y2="260.5" stroke="#fff" stroke-width="1"/>
<line x1="232.5" y1="749.5" x2="661.5" y2="320.5" stroke="#fff" stroke-width="1"/>
<line x1="292.5" y1="749.5" x2="661.5" y2="380.5" stroke="#fff" stroke-width="1"/>
<line x1="352.5" y1="749.5" x2="661.5" y2="440.5" stroke="#fff" stroke-width="1"/>
<line x1="412.5" y1="749.5" x2="661.5" y2="500.5" stroke="#fff" stroke-width="1"/>
<line x1="472.5" y1="749.5" x2="661.5" y2="560.5" stroke="#fff" stroke-width="1"/>
<line x1="532.5" y1="749.5" x2="661.5" y2="620.5" stroke="#fff" stroke-width="1"/>
<line x1="592.5" y1="749.5" x2="661.5" y2="680.5" stroke="#fff" stroke-width="1"/>
<line x1="652.5" y1="749.5" x2="661.5" y2="740.5" stroke="#fff" stroke-width="1"/>
</g>
<line x1="56.0" y1="50.5" x2="667.0" y2="50.5" stroke="#fff" stroke-width="1"/>
<line x1="56.0" y1="321.5" x2="667.0" y2="321.5" stroke="#fff" stroke-width="1"/>
<line x1="56.0" y1="449.5" x2="667.0" y2="449.5" stroke="#fff" stroke-width="1"/>
<line x1="56.0" y1="529.5" x2="667.0" y2="529.5" stroke="#fff" stroke-width="1"/>
<line x1="56.0" y1="586.5" x2="667.0" y2="586.5" stroke="#fff" stroke-width="1"/>
<line x1="56.0" y1="630.5" x2="667.0" y2="630.5" stroke="#fff" stroke-width="1"/>
<line x1="56.0" y1="665.5" x2="667.0" y2="665.5" stroke="#fff" stroke-width="1"/>
<line x1="56.0" y1="694.5" x2="667.0" y2="694.5" stroke="#fff" stroke-width="1"/>
<line x1="56.0" y1="719.5" x2="667.0" y2="719.5" stroke="#fff" stroke-width="1"/>
<line x1="56.0" y1="740.5" x2="662.0" y2="740.5" stroke="#fff" stroke-width="1"/>
<line x1="61.5" y1="50.0" x2="61.5" y2="750.0" stroke="#fff" stroke-width="1"/>
<line x1="661.5" y1="50.0" x2="661.5" y2="750.0" stroke="#fff" stroke-width="1"/>
<line x1="61.0" y1="749.5" x2="662.0" y2="749.5" stroke="#fff" stroke-width="1"/>
<line x1="61.5" y1="749.0" x2="61.5" y2="755.0" stroke="#fff" stroke-width="1"/>
<line x1="121.5" y1="749.0" x2="121.5" y2="755.0" stroke="#fff" stroke-width="1"/>
<line x1="181.5" y1="749.0" x2="181.5" y2="755.0" stroke="#fff" stroke-width="1"/>
<line x1="241.5" y1="749.0" x2="241.5" y2="755.0" stroke="#fff" stroke-width="1"/>
<line x1="301.5" y1="749.0" x2="301.5" y2="755.0" stroke="#fff" stroke-width="1"/>
<line x1="361.5" y1="749.0" x2="361.5" y2="755.0" stroke="#fff" stroke-width="1"/>
<line x1="421.5" y1="749.0" x2="421.5" y2="755.0" stroke="#fff" stroke-width="1"/>
<line x1="481.5" y1="749.0" x2="481.5" y2="755.0" stroke="#fff" stroke-width="1"/>
<line x1="541.5" y1="749.0" x2="541.5" y2="755.0" stroke="#fff" stroke-width="1"/>
<line x1="601.5" y1="749.0" x2="601.5" y2="755.0" stroke="#fff" stroke-width="1"/>
<line x1="661.5" y1="749.0" x2="661.5" y2="755.0" stroke="#fff" stroke-width="1"/>
<g clip-path="url(#plotclip2)">
<line x1="61.0" y1="712.5" x2="626.0" y2="712.5" stroke="#ff00ff" stroke-width="1"/>
<path d="M634 146.5h5M636.5 144v5M559 218.5h5M561.5 216v5M504 274.5h5M506.5 272v5M445 321.5h5M447.5 319v5M389 360.5h5M391.5 358v5M367 394.5h5M369.5 392v5M362 423.5h5M364.5 421v5M363 449.5h5M365.5 447v5M367 471.5h5M369.5 469v5M372 493.5h5M374.5 491v5M378 512.5h5M380.5 510v5M382 529.5h5M384.5 527v5M385 545.5h5M387.5 543v5M388 560.5h5M390.5 558v5M392 574.5h5M394.5 572v5M398 598.5h5M400.5 596v5M400 610.5h5M402.5 608v5M402 620.5h5M404.5 618v5M409 639.5h5M411.5 637v5M408 648.5h5M410.5 646v5M410 657.5h5M412.5 655v5M417 666.5h5M419.5 664v5M419 680.5h5M421.5 678v5M422 694.5h5M424.5 692v5M431 702.5h5M433.5 700v5M442 710.5h5M444.5 708v5M451 717.5h5M453.5 715v5M462 724.5h5M464.5 722v5M468 729.5h5M470.5 727v5M472 731.5h5M474.5 729v5" stroke="#fff" stroke-width="1" fill="none"/>
<path d="M477 146.5h5M479.5 144v5M403 218.5h5M405.5 216v5M401 274.5h5M403.5 272v5M386 321.5h5M388.5 319v5M362 359.5h5M364.5 357v5M353 394.5h5M355.5 392v5M351 423.5h5M353.5 421v5M355 449.5h5M357.5 447v5M365 471.5h5M367.5 469v5M370 493.5h5M372.5 491v5M374 512.5h5M376.5 510v5M377 529.5h5M379.5 527v5M377 545.5h5M379.5 543v5M376 560.5h5M378.5 558v5M378 574.5h5M380.5 572v5M385 598.5h5M387.5 596v5M387 610.5h5M389.5 608v5M390 620.5h5M392.5 618v5M399 639.5h5M401.5 637v5M399 648.5h5M401.5 646v5M401 657.5h5M403.5 655v5M412 666.5h5M414.5 664v5M415 680.5h5M417.5 678v5M420 694.5h5M422.5 692v5M424 702.5h5M426.5 700v5M427 710.5h5M429.5 708v5M432 719.5h5M434.5 717v5M439 731.5h5M441.5 729v5" stroke="#fff" stroke-width="1" fill="none"/>
<path d="M209 146.5h5M211.5 144v5M239 218.5h5M241.5 216v5M233 274.5h5M235.5 272v5M245 321.5h5M247.5 319v5M275 359.5h5M277.5 357v5M269 394.5h5M271.5 392v5M275 423.5h5M277.5 421v5M288 449.5h5M290.5 447v5M293 472.5h5M295.5 470v5M281 493.5h5M283.5 491v5M251 512.5h5M253.5 510v5M233 529.5h5M235.5 527v5M215 545.5h5M217.5 543v5M196 560.5h5M198.5 558v5M179 574.5h5M181.5 572v5M167 586.5h5M169.5 584v5M149 598.5h5M151.5 596v5M137 610.5h5M139.5 608v5M119 619.5h5M121.5 617v5M107 630.5h5M109.5 628v5M97 639.5h5M99.5 637v5M92 648.5h5M94.5 646v5M89 657.5h5M91.5 655v5M95 666.5h5M97.5 664v5M107 679.5h5M109.5 677v5M113 694.5h5M115.5 692v5M125 702.5h5M127.5 700v5M111 710.5h5M113.5 708v5M102 718.5h5M104.5 716v5M89 725.5h5M91.5 723v5M83 730.5h5M85.5 728v5" stroke="#fff" stroke-width="1" fill="none"/>
<path d="M174 146.5h5M176.5 144v5M210 218.5h5M212.5 216v5M205 274.5h5M207.5 272v5M227 321.5h5M229.5 319v5M269 359.5h5M271.5 357v5M271 394.5h5M273.5 392v5M283 423.5h5M285.5 421v5M300 449.5h5M302.5 447v5M306 472.5h5M308.5 470v5M293 493.5h5M295.5 491v5M259 512.5h5M261.5 510v5M238 529.5h5M240.5 527v5M215 545.5h5M217.5 543v5M196 559.5h5M198.5 557v5M176 574.5h5M178.5 572v5M162 586.5h5M164.5 584v5M141 598.5h5M143.5 596v5M127 610.5h5M129.5 608v5M112 620.5h5M114.5 618v5M102 630.5h5M104.5 628v5M97 636.5h5M99.5 634v5M97 648.5h5M99.5 646v5M97 657.5h5M99.5 655v5M99 666.5h5M101.5 664v5M124 679.5h5M126.5 677v5M131 693.5h5M133.5 691v5M113 702.5h5M115.5 700v5M111 710.5h5M113.5 708v5M113 717.5h5M115.5 715v5M120 725.5h5M122.5 723v5M124 729.5h5M126.5 727v5M129 731.5h5M131.5 729v5" stroke="#fff" stroke-width="1" fill="none"/>
<path d="M60 694.5h5M62.5 692v5M61 700.5h5M63.5 698v5M64 703.5h5M66.5 701v5M82 710.5h5M84.5 708v5M113 718.5h5M115.5 716v5M160 725.5h5M162.5 723v5M199 728.5h5M201.5 726v5M209 730.5h5M211.5 728v5M227 731.5h5M229.5 729v5M236 731.5h5M238.5 729v5" stroke="#fff" stroke-width="1" fill="none"/>
<path d="M205 657.5h5M207.5 655v5M202 665.5h5M204.5 663v5M194 694.5h5M196.5 692v5M178 702.5h5M180.5 700v5M185 710.5h5M187.5 708v5M193 718.5h5M195.5 716v5M203 725.5h5M205.5 723v5M209 730.5h5M211.5 728v5" stroke="#fff" stroke-width="1" fill="none"/>
<path d="M59 648.5h5M61.5 646v5M59 657.5h5M61.5 655v5M59 679.5h5M61.5 677v5M59 703.5h5M61.5 701v5M59 730.5h5M61.5 728v5" stroke="#fff" stroke-width="1" fill="none"/>
<path d="M442 710.5h5M444.5 708v5" stroke="#fff" stroke-width="1" fill="none"/>
<polyline points="159.4,50.0 176.0,146.6 212.1,218.6 207.5,274.3 229.3,321.5 271.6,359.9 273.6,394.5 285.2,423.4 302.3,449.6 308.2,472.6 295.4,493.6 261.3,512.3 240.3,529.4 217.8,545.6 198.6,559.7 178.1,574.3 164.0,586.6 143.5,598.1 129.4,610.4 114.0,620.7 104.5,630.1 99.4,636.5 99.4,648.5 99.7,657.6 101.6,666.4 126.7,679.8 133.3,693.9 115.8,702.7 113.6,710.7 115.3,717.6 122.3,725.4 126.7,729.3 131.1,731.5" fill="none" stroke="#ff0080" stroke-width="1" />
<polyline points="181.4,50.0 211.4,146.6 241.4,218.6 235.7,274.3 247.2,321.5 277.5,359.9 271.1,394.5 277.5,423.4 290.3,449.6 295.4,472.6 283.1,493.6 253.7,512.3 235.7,529.4 217.8,545.6 198.6,560.4 181.4,574.3 169.1,586.6 151.7,598.1 139.1,610.4 121.7,619.9 109.7,630.9 99.9,639.1 94.0,648.5 91.6,657.6 97.5,666.4 109.5,679.8 115.8,694.2 127.2,702.7 113.6,710.7 104.0,718.3 91.6,725.4 85.5,730.0" fill="none" stroke="#00ff00" stroke-width="1" />
<polyline points="211.4,652.2 207.5,657.5 204.6,665.7 199.2,681.4 196.0,694.1 180.7,702.4 184.5,706.5 187.8,710.6 195.6,718.3 205.1,725.4 211.7,730.8" fill="none" stroke="#c0c000" stroke-width="1" />
<polyline points="62.3,694.9 63.8,700.0 66.0,703.7 84.3,710.0 115.8,718.3 162.6,725.4 201.4,728.6 211.7,730.8 229.2,731.5 238.7,731.5" fill="none" stroke="#ffff00" stroke-width="1" />
<polyline points="570.9,50.0 479.4,146.6 405.1,218.6 403.0,274.3 388.9,321.5 364.6,359.9 355.6,394.5 353.1,423.4 357.2,449.6 367.9,471.9 372.5,493.0 376.9,512.3 379.5,529.0 379.0,545.6 378.2,560.4 380.2,574.3 387.2,598.1 389.2,610.4 392.3,620.7 401.2,639.9 401.2,648.6 403.8,657.8 414.1,666.0 417.9,680.1 422.3,694.2 426.4,702.6 429.4,710.5 434.6,719.4 441.0,731.7" fill="none" stroke="#00ffff" stroke-width="1" />
<polyline points="660.8,119.9 636.4,146.6 561.1,218.6 506.3,274.3 447.4,321.5 391.5,360.4 369.5,394.2 364.1,423.4 365.5,449.6 369.2,471.9 374.5,493.0 380.7,512.3 384.0,529.0 387.7,545.6 390.5,560.4 394.1,574.3 400.0,598.1 402.5,610.4 404.3,620.7 411.0,639.9 410.2,648.6 412.8,657.8 419.2,666.0 421.2,680.1 424.8,694.2 433.3,702.6 444.8,710.5 453.8,717.6 464.0,724.6 470.4,729.2 474.3,731.2" fill="none" stroke="#ff0000" stroke-width="1" />
<polyline points="399.5,50.0 374.6,128.0 358.0,202.4 352.5,230.0 348.3,258.5 346.3,287.0 345.7,321.0" fill="none" stroke="#ffffff" stroke-width="1" stroke-dasharray="1 2"/>
<polyline points="347.7,321.0 348.9,344.0 351.2,372.0 354.8,395.0 359.1,423.6 364.0,449.0 371.0,472.0 374.5,481.0 392.0,530.2 408.6,575.0 425.3,628.9 432.5,649.4 436.8,667.3 441.2,690.3 445.8,710.5" fill="none" stroke="#ffffff" stroke-width="1" stroke-dasharray="1 2"/>
<polyline points="400.5,50.0 375.6,128.0 359.0,202.4 353.5,230.0 349.3,258.5 347.3,287.0 346.7,321.0 347.9,344.0 350.2,372.0 353.8,395.0 358.1,423.6 363.0,449.0 370.0,472.0 373.5,481.0 391.0,530.2 407.6,575.0 424.3,628.9 431.5,649.4 435.8,667.3 440.2,690.3 444.8,710.5" fill="none" stroke="#ff00ff" stroke-width="1" />
<polyline points="444.8,710.5 474.3,731.2" fill="none" stroke="#ff00ff" stroke-width="1" />
<polyline points="444.8,710.5 434.5,731.2" fill="none" stroke="#ff00ff" stroke-width="1" />
<line x1="62.5" y1="662.0" x2="62.5" y2="672.0" stroke="#e07000" stroke-width="1"/>
<line x1="62.5" y1="696.0" x2="62.5" y2="707.0" stroke="#e07000" stroke-width="1"/>
<line x1="62.5" y1="728.0" x2="62.5" y2="732.0" stroke="#e07000" stroke-width="1"/>
</g>
<rect x="181" y="703" width="7" height="7" fill="#c0c000"/>
<text x="184.5" y="709" fill="#000" text-anchor="middle" font-weight="bold" font-size="8" stroke="#000" stroke-width=".4">1</text>
<rect x="196" y="678" width="7" height="7" fill="#c0c000"/>
<text x="199.5" y="684" fill="#000" text-anchor="middle" font-weight="bold" font-size="8" stroke="#000" stroke-width=".4">2</text>
<rect x="208" y="649" width="7" height="7" fill="#c0c000"/>
<text x="211.5" y="655" fill="#000" text-anchor="middle" font-weight="bold" font-size="8" stroke="#000" stroke-width=".4">3</text>
<rect x="67.5" y="607.5" width="43" height="17" fill="#000" stroke="#ffff00"/>
<text x="72" y="621" fill="#ffff00" textLength="35.6" lengthAdjust="spacing">CAPE</text>
<rect x="67.5" y="636.5" width="57" height="17" fill="#000" stroke="#e07000"/>
<text x="72" y="650" fill="#e07000" textLength="49.2" lengthAdjust="spacing">CINH * 5</text>
<rect x="625.5" y="703.5" width="30" height="17" fill="#000" stroke="#ff00ff"/>
<text x="629" y="716.5" fill="#ff00ff" textLength="22.7" lengthAdjust="spacing">LCL</text>
<text x="52" y="54.6" fill="#fff" text-anchor="end" textLength="21" lengthAdjust="spacing">100</text>
<text x="52" y="325.6" fill="#fff" text-anchor="end" textLength="21" lengthAdjust="spacing">200</text>
<text x="52" y="453.6" fill="#fff" text-anchor="end" textLength="21" lengthAdjust="spacing">300</text>
<text x="52" y="533.6" fill="#fff" text-anchor="end" textLength="21" lengthAdjust="spacing">400</text>
<text x="52" y="590.6" fill="#fff" text-anchor="end" textLength="21" lengthAdjust="spacing">500</text>
<text x="52" y="634.6" fill="#fff" text-anchor="end" textLength="21" lengthAdjust="spacing">600</text>
<text x="52" y="669.6" fill="#fff" text-anchor="end" textLength="21" lengthAdjust="spacing">700</text>
<text x="52" y="698.6" fill="#fff" text-anchor="end" textLength="21" lengthAdjust="spacing">800</text>
<text x="52" y="723.6" fill="#fff" text-anchor="end" textLength="21" lengthAdjust="spacing">900</text>
<text x="52" y="744.6" fill="#fff" text-anchor="end" textLength="28" lengthAdjust="spacing">1000</text>
<text x="670" y="49.6" fill="#fff" textLength="45.4" lengthAdjust="spacing">16184m</text>
<text x="670" y="320.6" fill="#fff" textLength="45.4" lengthAdjust="spacing">11730m</text>
<text x="670" y="448.6" fill="#fff" textLength="39" lengthAdjust="spacing">9145m</text>
<text x="670" y="528.6" fill="#fff" textLength="39" lengthAdjust="spacing">7178m</text>
<text x="670" y="585.6" fill="#fff" textLength="39" lengthAdjust="spacing">5559m</text>
<text x="670" y="629.6" fill="#fff" textLength="39" lengthAdjust="spacing">4180m</text>
<text x="670" y="664.6" fill="#fff" textLength="39" lengthAdjust="spacing">3026m</text>
<text x="670" y="693.6" fill="#fff" textLength="39" lengthAdjust="spacing">1938m</text>
<text x="670" y="718.6" fill="#fff" textLength="32" lengthAdjust="spacing">963m</text>
<text x="59.0" y="768" fill="#fff" text-anchor="middle" textLength="18" lengthAdjust="spacing">-50</text>
<line x1="61.5" y1="788.0" x2="61.5" y2="792.0" stroke="#fff" stroke-width="1"/>
<text x="61.5" y="805" fill="#fff" text-anchor="middle">0</text>
<line x1="61.5" y1="826.0" x2="61.5" y2="830.0" stroke="#fff" stroke-width="1"/>
<text x="61.5" y="843" fill="#fff" text-anchor="middle">0</text>
<text x="119.0" y="768" fill="#fff" text-anchor="middle" textLength="18" lengthAdjust="spacing">-40</text>
<line x1="121.5" y1="788.0" x2="121.5" y2="792.0" stroke="#fff" stroke-width="1"/>
<text x="121.5" y="805" fill="#fff" text-anchor="middle" textLength="14" lengthAdjust="spacing">10</text>
<line x1="121.5" y1="826.0" x2="121.5" y2="830.0" stroke="#fff" stroke-width="1"/>
<text x="121.5" y="843" fill="#fff" text-anchor="middle" textLength="21" lengthAdjust="spacing">300</text>
<text x="179.0" y="768" fill="#fff" text-anchor="middle" textLength="18" lengthAdjust="spacing">-30</text>
<line x1="181.5" y1="788.0" x2="181.5" y2="792.0" stroke="#fff" stroke-width="1"/>
<text x="181.5" y="805" fill="#fff" text-anchor="middle" textLength="14" lengthAdjust="spacing">20</text>
<line x1="181.5" y1="826.0" x2="181.5" y2="830.0" stroke="#fff" stroke-width="1"/>
<text x="181.5" y="843" fill="#fff" text-anchor="middle" textLength="21" lengthAdjust="spacing">600</text>
<text x="239.0" y="768" fill="#fff" text-anchor="middle" textLength="18" lengthAdjust="spacing">-20</text>
<line x1="241.5" y1="788.0" x2="241.5" y2="792.0" stroke="#fff" stroke-width="1"/>
<text x="241.5" y="805" fill="#fff" text-anchor="middle" textLength="14" lengthAdjust="spacing">30</text>
<line x1="241.5" y1="826.0" x2="241.5" y2="830.0" stroke="#fff" stroke-width="1"/>
<text x="241.5" y="843" fill="#fff" text-anchor="middle" textLength="21" lengthAdjust="spacing">900</text>
<text x="299.0" y="768" fill="#fff" text-anchor="middle" textLength="18" lengthAdjust="spacing">-10</text>
<line x1="301.5" y1="788.0" x2="301.5" y2="792.0" stroke="#fff" stroke-width="1"/>
<text x="301.5" y="805" fill="#fff" text-anchor="middle" textLength="14" lengthAdjust="spacing">40</text>
<line x1="301.5" y1="826.0" x2="301.5" y2="830.0" stroke="#fff" stroke-width="1"/>
<text x="301.5" y="843" fill="#fff" text-anchor="middle" textLength="28" lengthAdjust="spacing">1200</text>
<text x="361.5" y="768" fill="#fff" text-anchor="middle">0</text>
<line x1="361.5" y1="788.0" x2="361.5" y2="792.0" stroke="#fff" stroke-width="1"/>
<text x="361.5" y="805" fill="#fff" text-anchor="middle" textLength="14" lengthAdjust="spacing">50</text>
<line x1="361.5" y1="826.0" x2="361.5" y2="830.0" stroke="#fff" stroke-width="1"/>
<text x="361.5" y="843" fill="#fff" text-anchor="middle" textLength="28" lengthAdjust="spacing">1500</text>
<text x="421.5" y="768" fill="#fff" text-anchor="middle" textLength="14" lengthAdjust="spacing">10</text>
<line x1="421.5" y1="788.0" x2="421.5" y2="792.0" stroke="#fff" stroke-width="1"/>
<text x="421.5" y="805" fill="#fff" text-anchor="middle" textLength="14" lengthAdjust="spacing">60</text>
<line x1="421.5" y1="826.0" x2="421.5" y2="830.0" stroke="#fff" stroke-width="1"/>
<text x="421.5" y="843" fill="#fff" text-anchor="middle" textLength="28" lengthAdjust="spacing">1800</text>
<text x="481.5" y="768" fill="#fff" text-anchor="middle" textLength="14" lengthAdjust="spacing">20</text>
<line x1="481.5" y1="788.0" x2="481.5" y2="792.0" stroke="#fff" stroke-width="1"/>
<text x="481.5" y="805" fill="#fff" text-anchor="middle" textLength="14" lengthAdjust="spacing">70</text>
<line x1="481.5" y1="826.0" x2="481.5" y2="830.0" stroke="#fff" stroke-width="1"/>
<text x="481.5" y="843" fill="#fff" text-anchor="middle" textLength="28" lengthAdjust="spacing">2100</text>
<text x="541.5" y="768" fill="#fff" text-anchor="middle" textLength="14" lengthAdjust="spacing">30</text>
<line x1="541.5" y1="788.0" x2="541.5" y2="792.0" stroke="#fff" stroke-width="1"/>
<text x="541.5" y="805" fill="#fff" text-anchor="middle" textLength="14" lengthAdjust="spacing">80</text>
<line x1="541.5" y1="826.0" x2="541.5" y2="830.0" stroke="#fff" stroke-width="1"/>
<text x="541.5" y="843" fill="#fff" text-anchor="middle" textLength="28" lengthAdjust="spacing">2400</text>
<text x="601.5" y="768" fill="#fff" text-anchor="middle" textLength="14" lengthAdjust="spacing">40</text>
<line x1="601.5" y1="788.0" x2="601.5" y2="792.0" stroke="#fff" stroke-width="1"/>
<text x="601.5" y="805" fill="#fff" text-anchor="middle" textLength="14" lengthAdjust="spacing">90</text>
<line x1="601.5" y1="826.0" x2="601.5" y2="830.0" stroke="#fff" stroke-width="1"/>
<text x="601.5" y="843" fill="#fff" text-anchor="middle" textLength="28" lengthAdjust="spacing">2700</text>
<text x="661.5" y="768" fill="#fff" text-anchor="middle" textLength="14" lengthAdjust="spacing">50</text>
<line x1="661.5" y1="788.0" x2="661.5" y2="792.0" stroke="#fff" stroke-width="1"/>
<text x="661.5" y="805" fill="#fff" text-anchor="middle" textLength="21" lengthAdjust="spacing">100</text>
<line x1="661.5" y1="826.0" x2="661.5" y2="830.0" stroke="#fff" stroke-width="1"/>
<text x="661.5" y="843" fill="#fff" text-anchor="middle" textLength="28" lengthAdjust="spacing">3000</text>
<line x1="61.5" y1="863.0" x2="61.5" y2="867.0" stroke="#fff" stroke-width="1"/>
<text x="59.0" y="880" fill="#fff" text-anchor="middle" textLength="25" lengthAdjust="spacing">-100</text>
<line x1="136.5" y1="863.0" x2="136.5" y2="867.0" stroke="#fff" stroke-width="1"/>
<text x="134.0" y="880" fill="#fff" text-anchor="middle" textLength="18" lengthAdjust="spacing">-50</text>
<line x1="211.5" y1="863.0" x2="211.5" y2="867.0" stroke="#fff" stroke-width="1"/>
<text x="211.5" y="880" fill="#fff" text-anchor="middle">0</text>
<line x1="286.5" y1="863.0" x2="286.5" y2="867.0" stroke="#fff" stroke-width="1"/>
<text x="286.5" y="880" fill="#fff" text-anchor="middle" textLength="14" lengthAdjust="spacing">50</text>
<line x1="361.5" y1="863.0" x2="361.5" y2="867.0" stroke="#fff" stroke-width="1"/>
<text x="361.5" y="880" fill="#fff" text-anchor="middle" textLength="21" lengthAdjust="spacing">100</text>
<line x1="436.5" y1="863.0" x2="436.5" y2="867.0" stroke="#fff" stroke-width="1"/>
<text x="436.5" y="880" fill="#fff" text-anchor="middle" textLength="21" lengthAdjust="spacing">150</text>
<line x1="511.5" y1="863.0" x2="511.5" y2="867.0" stroke="#fff" stroke-width="1"/>
<text x="511.5" y="880" fill="#fff" text-anchor="middle" textLength="21" lengthAdjust="spacing">200</text>
<line x1="586.5" y1="863.0" x2="586.5" y2="867.0" stroke="#fff" stroke-width="1"/>
<text x="586.5" y="880" fill="#fff" text-anchor="middle" textLength="21" lengthAdjust="spacing">250</text>
<line x1="661.5" y1="863.0" x2="661.5" y2="867.0" stroke="#fff" stroke-width="1"/>
<text x="661.5" y="880" fill="#fff" text-anchor="middle" textLength="21" lengthAdjust="spacing">300</text>
<text x="276" y="781" fill="#fff" textLength="172.7" lengthAdjust="spacing" xml:space="preserve">Temperature, Dewpoint  [ °C ]</text>
<text x="307" y="819" fill="#fff" textLength="106.8" lengthAdjust="spacing" xml:space="preserve">Windspeed  [ knt ]</text>
<text x="292" y="857" fill="#fff" textLength="137.4" lengthAdjust="spacing" xml:space="preserve">CAPE, CINH * 5  [ J/kg ]</text>
<text x="259" y="893" fill="#fff" textLength="204.3" lengthAdjust="spacing" xml:space="preserve">Storm Relative Helicity  [ m^2/s^2 ]</text>
<text x="61" y="29" fill="#fff" textLength="131" lengthAdjust="spacing" font-weight="bold" font-size="16">Station: Payerne</text>
<text x="217" y="29" fill="#fff" textLength="129" lengthAdjust="spacing" font-weight="bold" font-size="16">Date: 18.05.2008</text>
<text x="367" y="29" fill="#fff" textLength="94" lengthAdjust="spacing" font-weight="bold" font-size="16">Time: 1010Z</text>
<text x="761" y="32" fill="#00ff00" text-anchor="middle" textLength="27.8" lengthAdjust="spacing" font-family="'DejaVu Sans Condensed','DejaVu Sans',sans-serif" font-weight="bold" font-size="14">OBS</text>
<text x="826.3" y="32" fill="#ff0080" text-anchor="middle" textLength="18" lengthAdjust="spacing" font-family="'DejaVu Sans Condensed','DejaVu Sans',sans-serif" font-weight="bold" font-size="14">SR</text>
<line x1="761.5" y1="40.0" x2="761.5" y2="770.0" stroke="#00ff00" stroke-width="1"/>
<line x1="826.5" y1="40.0" x2="826.5" y2="770.0" stroke="#ff0080" stroke-width="1"/>
<path d="M761.5 146.6L739.5 164.7M761.5 218.6L742.2 239.6M761.5 274.3L742.2 296.4M761.5 321.5L747.0 346.5M761.5 360.0L752.4 388.5M761.5 394.4L756.7 423.4M761.5 423.4L758.4 452.5M761.5 449.6L761.5 478.5M761.5 472.6L762.5 501.5M761.5 493.6L761.0 522.0M761.5 512.3L759.4 541.0M761.5 529.4L756.9 558.0M761.5 545.6L753.5 573.3M761.5 560.4L751.4 587.7M761.5 574.3L750.0 600.5M761.5 586.6L748.1 612.4M761.5 598.1L745.9 622.7M761.5 610.4L744.0 633.3M761.5 620.3L741.7 642.2M761.5 630.5L739.2 647.9M761.5 639.5L735.2 652.6M761.5 648.5L732.2 648.5M761.5 657.6L737.2 641.0M761.5 666.2L741.2 647.4M761.5 680.0L754.9 653.7M761.5 694.2L756.3 663.6M761.5 702.7L745.3 678.1M761.5 710.6L745.8 686.2M761.5 718.0L748.7 692.5M761.5 725.4L756.3 696.5M761.5 729.2L763.2 700.5M761.5 731.2L770.4 703.2M826.5 146.6L813.3 171.8M826.5 218.6L814.5 245.6M826.5 274.3L815.3 301.5M826.5 321.5L820.4 349.5M826.5 360.0L825.7 389.0M826.5 394.4L829.7 423.4M826.5 423.4L832.7 451.0M826.5 449.6L835.0 478.0M826.5 472.6L834.5 500.5M826.5 493.6L833.5 521.5M826.5 512.3L832.5 541.0M826.5 529.4L831.2 558.7M826.5 545.6L830.5 574.5M826.5 560.4L831.0 589.0M826.5 574.3L831.0 603.0M826.5 586.6L831.5 615.2M826.5 598.1L832.5 626.5M826.5 610.4L835.0 638.5M826.5 620.3L840.0 646.0M826.5 630.5L845.5 653.5M826.5 639.5L850.2 655.5M826.5 648.5L855.9 653.6M826.5 657.6L854.0 647.3M826.5 666.2L851.3 651.2M826.5 680.0L848.9 662.5M826.5 694.2L847.8 673.5M826.5 702.7L838.9 676.3M826.5 710.6L844.0 687.0M826.5 718.0L849.7 701.0M826.5 725.4L852.7 713.3M826.5 729.2L855.0 719.0M826.5 731.2L855.0 722.0" stroke="#fff" stroke-width="1" fill="none"/>
<text x="894" y="40" fill="#fff" textLength="60.8" lengthAdjust="spacing">Parameter</text>
<line x1="894.0" y1="41.5" x2="954.8" y2="41.5" stroke="#fff" stroke-width="1"/>
<text x="1124" y="40" fill="#fff" text-anchor="end" textLength="60.8" lengthAdjust="spacing">Value LCL</text>
<line x1="1063.2" y1="41.5" x2="1124.0" y2="41.5" stroke="#fff" stroke-width="1"/>
<text x="1214" y="40" fill="#fff" text-anchor="end" textLength="62.5" lengthAdjust="spacing">Value CCL</text>
<line x1="1151.5" y1="41.5" x2="1214.0" y2="41.5" stroke="#fff" stroke-width="1"/>
<text x="1230" y="40" fill="#fff" textLength="23.4" lengthAdjust="spacing">Unit</text>
<line x1="1230.0" y1="41.5" x2="1253.4" y2="41.5" stroke="#fff" stroke-width="1"/>
<text x="894" y="62" fill="#fff" textLength="140.5" lengthAdjust="spacing">Convective Temperature:</text>
<text x="1124" y="62" fill="#00ff00" text-anchor="end" textLength="32" lengthAdjust="spacing">17.15</text>
<text x="1230" y="62" fill="#fff" textLength="22.7" lengthAdjust="spacing">[°C]</text>
<text x="894" y="79" fill="#fff" textLength="92.8" lengthAdjust="spacing">Snowfall Height:</text>
<text x="1124" y="79" fill="#fff" text-anchor="end" textLength="46" lengthAdjust="spacing">2261.17</text>
<text x="1230" y="79" fill="#fff" textLength="19.1" lengthAdjust="spacing">[m]</text>
<text x="894" y="104" fill="#fff" textLength="259.6" lengthAdjust="spacing">Parcels: Using 50mB mean layer LCL + CCL</text>
<line x1="894.0" y1="105.5" x2="1153.6" y2="105.5" stroke="#fff" stroke-width="1"/>
<text x="894" y="124" fill="#fff" textLength="69.3" lengthAdjust="spacing">Lifted Index:</text>
<text x="1124" y="124" fill="#ff0000" text-anchor="end" textLength="29" lengthAdjust="spacing">-2.27</text>
<text x="1214" y="124" fill="#ff0000" text-anchor="end" textLength="29" lengthAdjust="spacing">-2.32</text>
<text x="1230" y="124" fill="#fff" textLength="22.7" lengthAdjust="spacing">[°C]</text>
<text x="894" y="141" fill="#fff" textLength="39.4" lengthAdjust="spacing">CAPE:</text>
<text x="1124" y="141" fill="#ff0000" text-anchor="end" textLength="39" lengthAdjust="spacing">566.01</text>
<text x="1214" y="141" fill="#ffff00" text-anchor="end" textLength="39" lengthAdjust="spacing">571.38</text>
<text x="1230" y="141" fill="#fff" textLength="32.3" lengthAdjust="spacing">[J/kg]</text>
<text x="894" y="158" fill="#fff" textLength="33.7" lengthAdjust="spacing">CINH:</text>
<text x="1124" y="158" fill="#ff0000" text-anchor="end" textLength="25" lengthAdjust="spacing">0.35</text>
<text x="1230" y="158" fill="#fff" textLength="32.3" lengthAdjust="spacing">[J/kg]</text>
<text x="894" y="175" fill="#fff" textLength="67.5" lengthAdjust="spacing">CAPE Virt.:</text>
<text x="1124" y="175" fill="#ff0000" text-anchor="end" textLength="39" lengthAdjust="spacing">602.59</text>
<text x="1214" y="175" fill="#ffff00" text-anchor="end" textLength="39" lengthAdjust="spacing">566.99</text>
<text x="1230" y="175" fill="#fff" textLength="32.3" lengthAdjust="spacing">[J/kg]</text>
<text x="894" y="192" fill="#fff" textLength="61.5" lengthAdjust="spacing">CINH Virt.:</text>
<text x="1124" y="192" fill="#ff0000" text-anchor="end" textLength="25" lengthAdjust="spacing">0.55</text>
<text x="1230" y="192" fill="#fff" textLength="32.3" lengthAdjust="spacing">[J/kg]</text>
<text x="894" y="209" fill="#fff" textLength="142.2" lengthAdjust="spacing">DCAPE (LFS = 794mB):</text>
<text x="1124" y="209" fill="#00ff00" text-anchor="end" textLength="39" lengthAdjust="spacing">114.36</text>
<text x="1230" y="209" fill="#fff" textLength="32.3" lengthAdjust="spacing">[J/kg]</text>
<text x="894" y="226" fill="#fff" textLength="119.5" lengthAdjust="spacing">850-600 Lapse Rate:</text>
<text x="1124" y="226" fill="#ffff00" text-anchor="end" textLength="32" lengthAdjust="spacing">18.21</text>
<text x="1230" y="226" fill="#fff" textLength="22.7" lengthAdjust="spacing">[°C]</text>
<text x="894" y="243" fill="#fff" textLength="146.5" lengthAdjust="spacing">Fawbush-Miller Hail Size:</text>
<text x="1124" y="243" fill="#ffff00" text-anchor="end">1.3 - 1.9</text>
<text x="1230" y="243" fill="#fff" textLength="26.3" lengthAdjust="spacing">[cm]</text>
<text x="894" y="260" fill="#fff" textLength="140.8" lengthAdjust="spacing">Sig. Hail Param. (SHIP):</text>
<text x="1124" y="260" fill="#00ff00" text-anchor="end" textLength="25" lengthAdjust="spacing">0.66</text>
<text x="1230" y="260" fill="#fff" textLength="15.6" lengthAdjust="spacing">[1]</text>
<text x="894" y="277" fill="#fff" textLength="186.3" lengthAdjust="spacing">Max. Hail Size (new, new2, old):</text>
<text x="1230" y="277" fill="#fff" textLength="26.3" lengthAdjust="spacing">[cm]</text>
<text x="1124" y="277" fill="#ffff00" text-anchor="end" textLength="25" lengthAdjust="spacing">1.17</text>
<text x="1125" y="277" fill="#fff">,</text>
<text x="1136" y="277" fill="#ffff00" textLength="25" lengthAdjust="spacing">1.01</text>
<text x="1161" y="277" fill="#fff">,</text>
<text x="1172" y="277" fill="#00ff00" textLength="25" lengthAdjust="spacing">0.60</text>
<text x="894" y="297" fill="#fff" textLength="101.7" lengthAdjust="spacing">LCL / CCL (AGL):</text>
<text x="1124" y="297" fill="#ff0000" text-anchor="end" textLength="39" lengthAdjust="spacing">805.72</text>
<text x="1214" y="297" fill="#ff0000" text-anchor="end" textLength="39" lengthAdjust="spacing">808.28</text>
<text x="1230" y="297" fill="#fff" textLength="19.1" lengthAdjust="spacing">[m]</text>
<text x="894" y="314" fill="#fff" textLength="104.9" lengthAdjust="spacing">Convective Height:</text>
<text x="1124" y="314" fill="#ffff00" text-anchor="end" textLength="25" lengthAdjust="spacing">7.72</text>
<text x="1214" y="314" fill="#ffff00" text-anchor="end" textLength="25" lengthAdjust="spacing">7.75</text>
<text x="1230" y="314" fill="#fff" textLength="26.3" lengthAdjust="spacing">[km]</text>
<text x="894" y="339" fill="#fff" textLength="105.9" lengthAdjust="spacing">Convective Indices</text>
<line x1="894.0" y1="340.5" x2="999.9" y2="340.5" stroke="#fff" stroke-width="1"/>
<text x="894" y="359" fill="#fff" textLength="94.9" lengthAdjust="spacing">Showalter Index:</text>
<text x="1124" y="359" fill="#ff0000" text-anchor="end" textLength="25" lengthAdjust="spacing">0.55</text>
<text x="1230" y="359" fill="#fff" textLength="22.7" lengthAdjust="spacing">[°C]</text>
<text x="894" y="376" fill="#fff" textLength="149.7" lengthAdjust="spacing">Modified Thompson Index:</text>
<text x="1124" y="376" fill="#ff0000" text-anchor="end" textLength="32" lengthAdjust="spacing">42.25</text>
<text x="1230" y="376" fill="#fff" textLength="22.7" lengthAdjust="spacing">[°C]</text>
<text x="894" y="393" fill="#fff" textLength="104.9" lengthAdjust="spacing">Total Totals Index:</text>
<text x="1124" y="393" fill="#ff0000" text-anchor="end" textLength="32" lengthAdjust="spacing">52.32</text>
<text x="1230" y="393" fill="#fff" textLength="22.7" lengthAdjust="spacing">[°C]</text>
<text x="894" y="410" fill="#fff" textLength="57.2" lengthAdjust="spacing">KO Index:</text>
<text x="1124" y="410" fill="#ffff00" text-anchor="end" textLength="29" lengthAdjust="spacing">-7.29</text>
<text x="1230" y="410" fill="#fff" textLength="15.6" lengthAdjust="spacing">[1]</text>
<text x="894" y="427" fill="#fff" textLength="123" lengthAdjust="spacing">Craven SigSvr / 1000:</text>
<text x="1124" y="427" fill="#ff0000" text-anchor="end" textLength="25" lengthAdjust="spacing">8.10</text>
<text x="1230" y="427" fill="#fff" textLength="54" lengthAdjust="spacing">[m^3/s^3]</text>
<text x="894" y="444" fill="#fff" textLength="113.8" lengthAdjust="spacing">SCP RM (new, old):</text>
<text x="1124" y="444" fill="#00ff00" text-anchor="end" textLength="25" lengthAdjust="spacing">0.29</text>
<text x="1230" y="444" fill="#fff" textLength="15.6" lengthAdjust="spacing">[1]</text>
<text x="1125" y="444" fill="#fff">,</text>
<text x="1136" y="444" fill="#00ff00" textLength="25" lengthAdjust="spacing">0.00</text>
<text x="894" y="461" fill="#fff" textLength="112" lengthAdjust="spacing">SCP LM (new, old):</text>
<text x="1124" y="461" fill="#ffff00" text-anchor="end" textLength="25" lengthAdjust="spacing">0.47</text>
<text x="1230" y="461" fill="#fff" textLength="15.6" lengthAdjust="spacing">[1]</text>
<text x="1125" y="461" fill="#fff">,</text>
<text x="1136" y="461" fill="#00ff00" textLength="25" lengthAdjust="spacing">0.02</text>
<text x="894" y="478" fill="#fff" textLength="88.5" lengthAdjust="spacing">STP (new, old):</text>
<text x="1124" y="478" fill="#00ff00" text-anchor="end" textLength="25" lengthAdjust="spacing">0.03</text>
<text x="1230" y="478" fill="#fff" textLength="15.6" lengthAdjust="spacing">[1]</text>
<text x="1125" y="478" fill="#fff">,</text>
<text x="1136" y="478" fill="#00ff00" textLength="25" lengthAdjust="spacing">0.06</text>
<text x="894" y="495" fill="#fff" textLength="75" lengthAdjust="spacing">SB STP (fix):</text>
<text x="1124" y="495" fill="#00ff00" text-anchor="end" textLength="25" lengthAdjust="spacing">0.10</text>
<text x="1230" y="495" fill="#fff" textLength="15.6" lengthAdjust="spacing">[1]</text>
<text x="894" y="512" fill="#fff" textLength="131.2" lengthAdjust="spacing">Derecho Comp Param:</text>
<text x="1124" y="512" fill="#00ff00" text-anchor="end" textLength="25" lengthAdjust="spacing">0.04</text>
<text x="1230" y="512" fill="#fff" textLength="15.6" lengthAdjust="spacing">[1]</text>
<text x="894" y="529" fill="#fff" textLength="152.2" lengthAdjust="spacing">MCS 18m/s (MMP, MSP):</text>
<text x="1124" y="529" fill="#00ff00" text-anchor="end" textLength="32" lengthAdjust="spacing">51.45</text>
<text x="1230" y="529" fill="#fff" textLength="20.2" lengthAdjust="spacing">[%]</text>
<text x="1125" y="529" fill="#fff">,</text>
<text x="1136" y="529" fill="#fff">---</text>
<text x="894" y="546" fill="#fff" textLength="145.1" lengthAdjust="spacing">Exp. Supercell Index CH:</text>
<text x="1124" y="546" fill="#ffff00" text-anchor="end" textLength="25" lengthAdjust="spacing">1.26</text>
<text x="1230" y="546" fill="#fff" textLength="15.6" lengthAdjust="spacing">[1]</text>
<text x="894" y="563" fill="#fff" textLength="99.2" lengthAdjust="spacing">SWISS 12 Index:</text>
<text x="1124" y="563" fill="#ff0000" text-anchor="end" textLength="29" lengthAdjust="spacing">-4.80</text>
<text x="1230" y="563" fill="#fff" textLength="15.6" lengthAdjust="spacing">[1]</text>
<text x="894" y="588" fill="#fff" textLength="101.3" lengthAdjust="spacing">Wind Parameters</text>
<line x1="894.0" y1="589.5" x2="995.3" y2="589.5" stroke="#fff" stroke-width="1"/>
<text x="894" y="608" fill="#fff" textLength="93.1" lengthAdjust="spacing">Storm Direction:</text>
<text x="1124" y="608" fill="#fff" text-anchor="end" textLength="39" lengthAdjust="spacing">274.52</text>
<text x="1230" y="608" fill="#fff" textLength="13.1" lengthAdjust="spacing">[°]</text>
<text x="894" y="625" fill="#fff" textLength="81.4" lengthAdjust="spacing">Storm Motion:</text>
<text x="1124" y="625" fill="#00ff00" text-anchor="end" textLength="32" lengthAdjust="spacing">10.14</text>
<text x="1230" y="625" fill="#fff" textLength="26.3" lengthAdjust="spacing">[knt]</text>
<text x="894" y="645" fill="#fff" textLength="107.7" lengthAdjust="spacing">SR Wind Sfc-2km:</text>
<text x="1124" y="645" fill="#00ff00" text-anchor="end" textLength="25" lengthAdjust="spacing">9.71</text>
<text x="1230" y="645" fill="#fff" textLength="26.3" lengthAdjust="spacing">[knt]</text>
<text x="894" y="662" fill="#fff" textLength="113.4" lengthAdjust="spacing">SR Wind 4km-6km:</text>
<text x="1124" y="662" fill="#ff0000" text-anchor="end" textLength="32" lengthAdjust="spacing">15.46</text>
<text x="1230" y="662" fill="#fff" textLength="26.3" lengthAdjust="spacing">[knt]</text>
<text x="894" y="679" fill="#fff" textLength="120.2" lengthAdjust="spacing">SR Wind 9km-11km:</text>
<text x="1124" y="679" fill="#ff0000" text-anchor="end" textLength="32" lengthAdjust="spacing">35.42</text>
<text x="1230" y="679" fill="#fff" textLength="48.3" lengthAdjust="spacing">[knt] HP</text>
<text x="894" y="699" fill="#fff" textLength="121.2" lengthAdjust="spacing">Effective Shear 6000:</text>
<text x="1124" y="699" fill="#ffff00" text-anchor="end" textLength="32" lengthAdjust="spacing">27.80</text>
<text x="1230" y="699" fill="#fff" textLength="26.3" lengthAdjust="spacing">[knt]</text>
<text x="894" y="719" fill="#fff" textLength="147.6" lengthAdjust="spacing">Bulk Richardson Number:</text>
<text x="1124" y="719" fill="#ffff00" text-anchor="end" textLength="32" lengthAdjust="spacing">94.40</text>
<text x="1214" y="719" fill="#ffff00" text-anchor="end" textLength="32" lengthAdjust="spacing">95.30</text>
<text x="1230" y="719" fill="#fff" textLength="15.6" lengthAdjust="spacing">[1]</text>
<text x="894" y="739" fill="#fff" textLength="111.3" lengthAdjust="spacing">3km Effective SRH:</text>
<text x="1124" y="739" fill="#00ff00" text-anchor="end" textLength="29" lengthAdjust="spacing">-0.08</text>
<text x="1230" y="739" fill="#fff" textLength="54" lengthAdjust="spacing">[m^2/s^2]</text>
<text x="894" y="756" fill="#fff" textLength="148.6" lengthAdjust="spacing">Max 3km SRH (Sfc-2km):</text>
<text x="1124" y="756" fill="#00ff00" text-anchor="end" textLength="32" lengthAdjust="spacing">21.62</text>
<text x="1230" y="756" fill="#fff" textLength="54" lengthAdjust="spacing">[m^2/s^2]</text>
<text x="894" y="773" fill="#fff" textLength="151.5" lengthAdjust="spacing">Max 3km SRH Level AGL:</text>
<text x="1124" y="773" fill="#00ff00" text-anchor="end" textLength="46" lengthAdjust="spacing">1155.00</text>
<text x="1230" y="773" fill="#fff" textLength="19.1" lengthAdjust="spacing">[m]</text>
<text x="894" y="793" fill="#fff" textLength="155.4" lengthAdjust="spacing">3km Energy Helicity Index:</text>
<text x="1124" y="793" fill="#00ff00" text-anchor="end" textLength="25" lengthAdjust="spacing">0.00</text>
<text x="1214" y="793" fill="#00ff00" text-anchor="end" textLength="25" lengthAdjust="spacing">0.00</text>
<text x="1230" y="793" fill="#fff" textLength="15.6" lengthAdjust="spacing">[1]</text>
<text x="894" y="810" fill="#fff" textLength="140.5" lengthAdjust="spacing">3km Vorticity Gen. Pot.:</text>
<text x="1124" y="810" fill="#00ff00" text-anchor="end" textLength="25" lengthAdjust="spacing">0.03</text>
<text x="1214" y="810" fill="#00ff00" text-anchor="end" textLength="25" lengthAdjust="spacing">0.03</text>
<text x="1230" y="810" fill="#fff" textLength="42.3" lengthAdjust="spacing">[m/s^2]</text>
<rect x="729" y="827" width="15" height="8" fill="#ff0000"/>
<text x="753" y="836" fill="#ff0000" textLength="112.1" lengthAdjust="spacing">Temperature Profile</text>
<rect x="729" y="847" width="15" height="8" fill="#00ffff"/>
<text x="753" y="856" fill="#00ffff" textLength="93" lengthAdjust="spacing">Dewpoint Profile</text>
<rect x="729" y="867" width="15" height="8" fill="#00ff00"/>
<text x="753" y="876" fill="#00ff00">OBS Windspeed Profile</text>
<rect x="729" y="887" width="15" height="8" fill="#ff0080"/>
<text x="753" y="896" fill="#ff0080">SR Windspeed Profile</text>
<rect x="729" y="907" width="15" height="8" fill="#c0c000"/>
<text x="753" y="916" fill="#c0c000">Sfc-3km Storm Relative Helicity Profile</text>
<rect x="729" y="927" width="15" height="8" fill="#404000"/>
<text x="753" y="936" fill="#404000">Effective Layer (CAPE &gt;= 100 J/kg)</text>
<rect x="1079" y="827" width="15" height="8" fill="#00ff00"/>
<text x="1103" y="836" fill="#00ff00" textLength="183.6" lengthAdjust="spacing">No / Non Severe Thunderstorms</text>
<rect x="1079" y="847" width="15" height="8" fill="#ffff00"/>
<text x="1103" y="856" fill="#ffff00" textLength="211.7" lengthAdjust="spacing">Scattered / Moderate Thunderstorms</text>
<rect x="1079" y="867" width="15" height="8" fill="#ff0000"/>
<text x="1103" y="876" fill="#ff0000" textLength="209.6" lengthAdjust="spacing">Widespread / Severe Thunderstorms</text>
</svg></body></html>
